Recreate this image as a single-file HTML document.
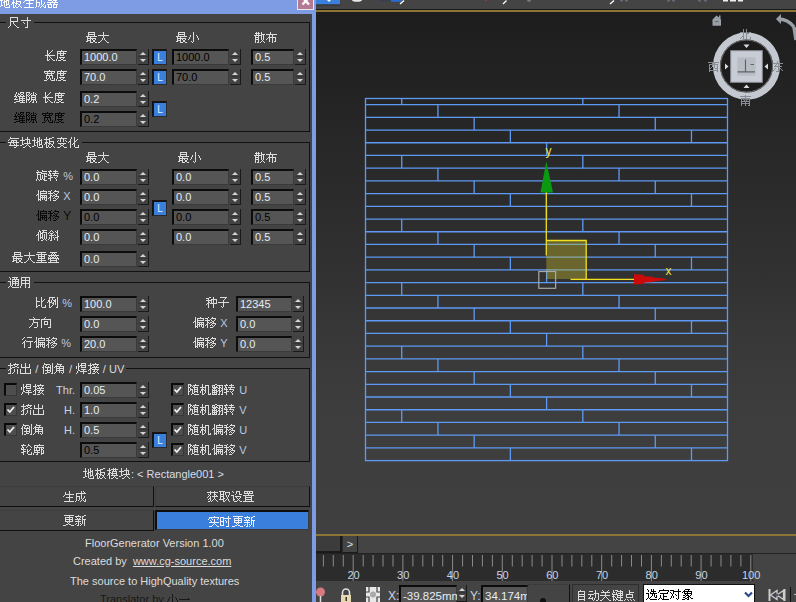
<!DOCTYPE html><html><head><meta charset="utf-8"><style>
*{margin:0;padding:0;box-sizing:border-box}
html,body{width:796px;height:602px;overflow:hidden;background:#444;font-family:"Liberation Sans",sans-serif;}
.abs{position:absolute}
.lbl{position:absolute;color:#dcdcdc;font-size:12px;line-height:14px;white-space:nowrap}
.lt{color:#b8c8e0;font-size:11px}
.dis{color:#0a0a0a}
.inp{position:absolute;background:#555;border-top:2px solid #0c0c0c;border-left:2px solid #0c0c0c;border-bottom:1px solid #3a3a3a;border-right:1px solid #3a3a3a;height:16px}
.inp span{position:absolute;left:2px;top:0px;font-size:11px;line-height:12px;color:#e4ecf4}
.inp.d span{color:#000}
.spn{position:absolute;width:11px;height:16px;background:linear-gradient(#424242 0,#424242 7px,#353535 7px,#353535 8px,#424242 8px);border-right:1px solid #1a1a1a;border-bottom:1px solid #1a1a1a}
.spn:before{content:"";position:absolute;left:1.5px;top:3px;border-left:3px solid transparent;border-right:3px solid transparent;border-bottom:3px solid #d4d4d4}
.spn:after{content:"";position:absolute;left:1.5px;top:10px;border-left:3px solid transparent;border-right:3px solid transparent;border-top:3px solid #d4d4d4}
.Lb{position:absolute;width:15px;height:16px;background:#3b7fdc;border-top:2px solid #141414;border-left:2px solid #141414;border-right:1px solid #2a2a2a;border-bottom:1px solid #2a2a2a;color:#e8f0ff;font-size:10px;line-height:14px;text-align:center}
.grp{position:absolute;border:1px solid #111}
.gl{position:absolute;background:#444;color:#dcdcdc;font-size:12px;line-height:14px;padding:0 2px;white-space:nowrap}
.cb{position:absolute;width:13px;height:13px;background:#4e4e4e;border-top:2px solid #0a0a0a;border-left:2px solid #0a0a0a;border-right:1px solid #383838;border-bottom:1px solid #383838}
.btn{position:absolute;border:1px solid #3c3c3c;border-right-color:#0e0e0e;border-bottom-color:#0e0e0e;background:#444;color:#dcdcdc;font-size:12px;line-height:20px;text-align:center}
.g{display:inline-block;position:relative;width:12px;height:14px;vertical-align:top}
.g b{font-weight:normal;color:transparent}
.g svg{position:absolute;left:0;top:0;overflow:visible}
.sp{display:inline-block;width:4px}
.tx{position:absolute;color:#dcdcdc;font-size:11px;line-height:12px;white-space:nowrap}

</style></head><body><svg width="0" height="0" style="position:absolute"><defs><symbol id="c4e00" viewBox="0 0 12 14" width="12" height="14"><path d="M9 5h1v1h-1zM0 6h11v1h-11z"/></symbol><symbol id="c4e1c" viewBox="0 0 12 14" width="12" height="14"><path d="M5 1h1v1h-1zM5 2h1v1h-1zM1 3h10v1h-10zM4 4h1v1h-1zM6 4h1v1h-1zM3 5h1v1h-1zM6 5h1v1h-1zM2 6h8v1h-8zM6 7h1v1h-1zM3 8h1v1h-1zM6 8h1v1h-1zM8 8h1v1h-1zM2 9h1v1h-1zM6 9h1v1h-1zM9 9h1v1h-1zM1 10h1v1h-1zM6 10h1v1h-1zM10 10h1v1h-1zM4 11h3v1h-3z"/></symbol><symbol id="c4f8b" viewBox="0 0 12 14" width="12" height="14"><path d="M2 1h6v1h-6zM10 1h1v1h-1zM2 2h1v1h-1zM5 2h1v1h-1zM10 2h1v1h-1zM2 3h1v1h-1zM5 3h1v1h-1zM8 3h1v1h-1zM10 3h1v1h-1zM1 4h2v1h-2zM4 4h1v1h-1zM6 4h3v1h-3zM10 4h1v1h-1zM1 5h2v1h-2zM4 5h1v1h-1zM7 5h2v1h-2zM10 5h1v1h-1zM0 6h1v1h-1zM2 6h3v1h-3zM6 6h1v1h-1zM8 6h1v1h-1zM10 6h1v1h-1zM2 7h1v1h-1zM5 7h2v1h-2zM8 7h1v1h-1zM10 7h1v1h-1zM2 8h1v1h-1zM6 8h1v1h-1zM8 8h1v1h-1zM10 8h1v1h-1zM2 9h1v1h-1zM5 9h1v1h-1zM10 9h1v1h-1zM2 10h1v1h-1zM4 10h1v1h-1zM10 10h1v1h-1zM2 11h2v1h-2zM9 11h2v1h-2z"/></symbol><symbol id="c5012" viewBox="0 0 12 14" width="12" height="14"><path d="M2 1h1v1h-1zM10 1h1v1h-1zM2 2h6v1h-6zM10 2h1v1h-1zM1 3h1v1h-1zM4 3h1v1h-1zM8 3h1v1h-1zM10 3h1v1h-1zM1 4h1v1h-1zM3 4h1v1h-1zM6 4h1v1h-1zM8 4h1v1h-1zM10 4h1v1h-1zM0 5h2v1h-2zM3 5h6v1h-6zM10 5h1v1h-1zM1 6h1v1h-1zM5 6h1v1h-1zM8 6h1v1h-1zM10 6h1v1h-1zM1 7h1v1h-1zM5 7h1v1h-1zM8 7h1v1h-1zM10 7h1v1h-1zM1 8h1v1h-1zM3 8h6v1h-6zM10 8h1v1h-1zM1 9h1v1h-1zM5 9h1v1h-1zM8 9h1v1h-1zM10 9h1v1h-1zM1 10h1v1h-1zM5 10h3v1h-3zM10 10h1v1h-1zM1 11h1v1h-1zM3 11h2v1h-2zM9 11h2v1h-2z"/></symbol><symbol id="c503e" viewBox="0 0 12 14" width="12" height="14"><path d="M3 1h1v1h-1zM6 1h5v1h-5zM3 2h2v1h-2zM7 2h1v1h-1zM2 3h1v1h-1zM4 3h1v1h-1zM6 3h5v1h-5zM2 4h1v1h-1zM4 4h3v1h-3zM10 4h1v1h-1zM1 5h2v1h-2zM4 5h1v1h-1zM6 5h1v1h-1zM8 5h1v1h-1zM10 5h1v1h-1zM0 6h1v1h-1zM2 6h1v1h-1zM4 6h1v1h-1zM6 6h1v1h-1zM8 6h1v1h-1zM10 6h1v1h-1zM2 7h1v1h-1zM4 7h1v1h-1zM6 7h1v1h-1zM8 7h1v1h-1zM10 7h1v1h-1zM2 8h1v1h-1zM4 8h3v1h-3zM8 8h1v1h-1zM10 8h1v1h-1zM2 9h1v1h-1zM4 9h1v1h-1zM6 9h1v1h-1zM8 9h1v1h-1zM10 9h1v1h-1zM2 10h1v1h-1zM7 10h1v1h-1zM9 10h1v1h-1zM2 11h1v1h-1zM5 11h2v1h-2zM10 11h1v1h-1z"/></symbol><symbol id="c504f" viewBox="0 0 12 14" width="12" height="14"><path d="M2 1h1v1h-1zM7 1h1v1h-1zM2 2h1v1h-1zM4 2h7v1h-7zM2 3h1v1h-1zM4 3h1v1h-1zM10 3h1v1h-1zM2 4h1v1h-1zM4 4h7v1h-7zM1 5h2v1h-2zM4 5h1v1h-1zM0 6h1v1h-1zM2 6h1v1h-1zM4 6h7v1h-7zM2 7h1v1h-1zM4 7h1v1h-1zM6 7h1v1h-1zM8 7h1v1h-1zM10 7h1v1h-1zM2 8h1v1h-1zM4 8h7v1h-7zM2 9h1v1h-1zM4 9h1v1h-1zM6 9h1v1h-1zM8 9h1v1h-1zM10 9h1v1h-1zM2 10h3v1h-3zM6 10h1v1h-1zM8 10h1v1h-1zM10 10h1v1h-1zM2 11h1v1h-1zM4 11h1v1h-1zM9 11h2v1h-2z"/></symbol><symbol id="c5173" viewBox="0 0 12 14" width="12" height="14"><path d="M2 1h1v1h-1zM8 1h1v1h-1zM3 2h1v1h-1zM7 2h1v1h-1zM1 3h9v1h-9zM5 4h1v1h-1zM5 5h1v1h-1zM0 6h10v1h-10zM5 7h1v1h-1zM4 8h1v1h-1zM6 8h1v1h-1zM3 9h1v1h-1zM7 9h1v1h-1zM2 10h1v1h-1zM8 10h1v1h-1zM0 11h2v1h-2zM9 11h2v1h-2z"/></symbol><symbol id="c51fa" viewBox="0 0 12 14" width="12" height="14"><path d="M5 1h1v1h-1zM1 2h1v1h-1zM5 2h1v1h-1zM9 2h1v1h-1zM1 3h1v1h-1zM5 3h1v1h-1zM9 3h1v1h-1zM1 4h1v1h-1zM5 4h1v1h-1zM9 4h1v1h-1zM1 5h9v1h-9zM5 6h1v1h-1zM0 7h1v1h-1zM5 7h1v1h-1zM10 7h1v1h-1zM0 8h1v1h-1zM5 8h1v1h-1zM10 8h1v1h-1zM0 9h1v1h-1zM5 9h1v1h-1zM10 9h1v1h-1zM0 10h1v1h-1zM5 10h1v1h-1zM10 10h1v1h-1zM0 11h11v1h-11z"/></symbol><symbol id="c52a8" viewBox="0 0 12 14" width="12" height="14"><path d="M7 1h1v1h-1zM1 2h4v1h-4zM7 2h1v1h-1zM7 3h1v1h-1zM6 4h5v1h-5zM0 5h6v1h-6zM7 5h1v1h-1zM10 5h1v1h-1zM2 6h1v1h-1zM7 6h1v1h-1zM10 6h1v1h-1zM2 7h1v1h-1zM7 7h1v1h-1zM10 7h1v1h-1zM1 8h1v1h-1zM4 8h1v1h-1zM7 8h1v1h-1zM10 8h1v1h-1zM0 9h5v1h-5zM6 9h1v1h-1zM10 9h1v1h-1zM4 10h1v1h-1zM6 10h1v1h-1zM10 10h1v1h-1zM5 11h1v1h-1zM8 11h2v1h-2z"/></symbol><symbol id="c5316" viewBox="0 0 12 14" width="12" height="14"><path d="M3 1h1v1h-1zM6 1h1v1h-1zM3 2h1v1h-1zM6 2h1v1h-1zM2 3h1v1h-1zM6 3h1v1h-1zM9 3h1v1h-1zM2 4h1v1h-1zM6 4h1v1h-1zM8 4h1v1h-1zM1 5h2v1h-2zM6 5h2v1h-2zM0 6h1v1h-1zM2 6h1v1h-1zM6 6h1v1h-1zM2 7h1v1h-1zM5 7h2v1h-2zM2 8h1v1h-1zM4 8h1v1h-1zM6 8h1v1h-1zM2 9h1v1h-1zM6 9h1v1h-1zM10 9h1v1h-1zM2 10h1v1h-1zM6 10h1v1h-1zM10 10h1v1h-1zM2 11h1v1h-1zM7 11h4v1h-4z"/></symbol><symbol id="c5317" viewBox="0 0 12 14" width="12" height="14"><path d="M3 1h1v1h-1zM6 1h1v1h-1zM3 2h1v1h-1zM6 2h1v1h-1zM3 3h1v1h-1zM6 3h1v1h-1zM0 4h4v1h-4zM6 4h1v1h-1zM9 4h2v1h-2zM3 5h1v1h-1zM6 5h3v1h-3zM3 6h1v1h-1zM6 6h1v1h-1zM3 7h1v1h-1zM6 7h1v1h-1zM2 8h2v1h-2zM6 8h1v1h-1zM1 9h1v1h-1zM3 9h1v1h-1zM6 9h1v1h-1zM10 9h1v1h-1zM0 10h1v1h-1zM3 10h1v1h-1zM6 10h1v1h-1zM10 10h1v1h-1zM3 11h1v1h-1zM7 11h4v1h-4z"/></symbol><symbol id="c5357" viewBox="0 0 12 14" width="12" height="14"><path d="M5 1h1v1h-1zM0 2h11v1h-11zM5 3h1v1h-1zM1 4h9v1h-9zM1 5h1v1h-1zM3 5h1v1h-1zM7 5h1v1h-1zM9 5h1v1h-1zM1 6h1v1h-1zM4 6h1v1h-1zM6 6h1v1h-1zM9 6h1v1h-1zM1 7h9v1h-9zM1 8h1v1h-1zM5 8h1v1h-1zM9 8h1v1h-1zM1 9h9v1h-9zM1 10h1v1h-1zM5 10h1v1h-1zM9 10h1v1h-1zM1 11h1v1h-1zM5 11h1v1h-1zM8 11h2v1h-2z"/></symbol><symbol id="c53d6" viewBox="0 0 12 14" width="12" height="14"><path d="M0 1h6v1h-6zM1 2h1v1h-1zM4 2h1v1h-1zM6 2h5v1h-5zM1 3h1v1h-1zM4 3h1v1h-1zM6 3h1v1h-1zM10 3h1v1h-1zM1 4h4v1h-4zM6 4h1v1h-1zM10 4h1v1h-1zM1 5h1v1h-1zM4 5h1v1h-1zM7 5h1v1h-1zM9 5h1v1h-1zM1 6h4v1h-4zM7 6h1v1h-1zM9 6h1v1h-1zM1 7h1v1h-1zM4 7h1v1h-1zM8 7h1v1h-1zM1 8h1v1h-1zM4 8h2v1h-2zM8 8h1v1h-1zM0 9h5v1h-5zM7 9h1v1h-1zM9 9h1v1h-1zM4 10h1v1h-1zM6 10h1v1h-1zM9 10h1v1h-1zM4 11h2v1h-2zM10 11h1v1h-1z"/></symbol><symbol id="c53d8" viewBox="0 0 12 14" width="12" height="14"><path d="M5 1h1v1h-1zM1 2h10v1h-10zM4 3h1v1h-1zM7 3h1v1h-1zM2 4h1v1h-1zM4 4h1v1h-1zM7 4h1v1h-1zM9 4h1v1h-1zM1 5h1v1h-1zM4 5h1v1h-1zM7 5h1v1h-1zM10 5h1v1h-1zM2 7h8v1h-8zM4 8h1v1h-1zM7 8h1v1h-1zM5 9h2v1h-2zM4 10h1v1h-1zM7 10h1v1h-1zM1 11h3v1h-3zM8 11h3v1h-3z"/></symbol><symbol id="c53e0" viewBox="0 0 12 14" width="12" height="14"><path d="M2 1h7v1h-7zM4 2h1v1h-1zM6 2h1v1h-1zM3 3h1v1h-1zM5 3h1v1h-1zM7 3h1v1h-1zM0 4h11v1h-11zM1 5h1v1h-1zM3 5h1v1h-1zM6 5h1v1h-1zM8 5h1v1h-1zM0 6h1v1h-1zM2 6h1v1h-1zM4 6h2v1h-2zM7 6h1v1h-1zM9 6h1v1h-1zM0 7h11v1h-11zM0 8h1v1h-1zM2 8h1v1h-1zM8 8h1v1h-1zM10 8h1v1h-1zM2 9h7v1h-7zM2 10h1v1h-1zM8 10h1v1h-1zM0 11h11v1h-11z"/></symbol><symbol id="c5411" viewBox="0 0 12 14" width="12" height="14"><path d="M4 1h1v1h-1zM3 2h1v1h-1zM0 3h10v1h-10zM0 4h1v1h-1zM9 4h1v1h-1zM0 5h1v1h-1zM3 5h4v1h-4zM9 5h1v1h-1zM0 6h1v1h-1zM3 6h1v1h-1zM6 6h1v1h-1zM9 6h1v1h-1zM0 7h1v1h-1zM3 7h1v1h-1zM6 7h1v1h-1zM9 7h1v1h-1zM0 8h1v1h-1zM3 8h4v1h-4zM9 8h1v1h-1zM0 9h1v1h-1zM9 9h1v1h-1zM0 10h1v1h-1zM9 10h1v1h-1zM0 11h1v1h-1zM7 11h3v1h-3z"/></symbol><symbol id="c5668" viewBox="0 0 12 14" width="12" height="14"><path d="M1 1h4v1h-4zM6 1h4v1h-4zM1 2h1v1h-1zM4 2h1v1h-1zM6 2h1v1h-1zM9 2h1v1h-1zM1 3h1v1h-1zM4 3h1v1h-1zM6 3h1v1h-1zM9 3h1v1h-1zM1 4h4v1h-4zM6 4h4v1h-4zM5 5h1v1h-1zM8 5h1v1h-1zM0 6h11v1h-11zM3 7h1v1h-1zM7 7h1v1h-1zM0 8h5v1h-5zM6 8h5v1h-5zM1 9h1v1h-1zM4 9h1v1h-1zM6 9h1v1h-1zM9 9h1v1h-1zM1 10h1v1h-1zM4 10h1v1h-1zM6 10h1v1h-1zM9 10h1v1h-1zM1 11h4v1h-4zM6 11h4v1h-4z"/></symbol><symbol id="c5730" viewBox="0 0 12 14" width="12" height="14"><path d="M2 1h1v1h-1zM7 1h1v1h-1zM2 2h1v1h-1zM5 2h1v1h-1zM7 2h1v1h-1zM2 3h1v1h-1zM5 3h1v1h-1zM7 3h1v1h-1zM9 3h1v1h-1zM0 4h4v1h-4zM5 4h1v1h-1zM7 4h3v1h-3zM2 5h1v1h-1zM5 5h3v1h-3zM9 5h1v1h-1zM2 6h1v1h-1zM4 6h2v1h-2zM7 6h1v1h-1zM9 6h1v1h-1zM2 7h1v1h-1zM5 7h1v1h-1zM7 7h1v1h-1zM9 7h1v1h-1zM2 8h1v1h-1zM5 8h1v1h-1zM7 8h3v1h-3zM2 9h2v1h-2zM5 9h1v1h-1zM7 9h1v1h-1zM10 9h1v1h-1zM0 10h2v1h-2zM5 10h1v1h-1zM10 10h1v1h-1zM6 11h5v1h-5z"/></symbol><symbol id="c5757" viewBox="0 0 12 14" width="12" height="14"><path d="M2 1h1v1h-1zM7 1h1v1h-1zM2 2h1v1h-1zM7 2h1v1h-1zM2 3h1v1h-1zM5 3h5v1h-5zM0 4h5v1h-5zM7 4h1v1h-1zM9 4h1v1h-1zM2 5h1v1h-1zM7 5h1v1h-1zM9 5h1v1h-1zM2 6h1v1h-1zM7 6h1v1h-1zM9 6h1v1h-1zM2 7h1v1h-1zM4 7h7v1h-7zM2 8h2v1h-2zM7 8h1v1h-1zM0 9h2v1h-2zM6 9h1v1h-1zM8 9h1v1h-1zM5 10h1v1h-1zM9 10h1v1h-1zM3 11h2v1h-2zM10 11h1v1h-1z"/></symbol><symbol id="c5927" viewBox="0 0 12 14" width="12" height="14"><path d="M5 1h1v1h-1zM5 2h1v1h-1zM5 3h1v1h-1zM0 4h11v1h-11zM5 5h1v1h-1zM5 6h1v1h-1zM4 7h1v1h-1zM6 7h1v1h-1zM4 8h1v1h-1zM6 8h1v1h-1zM3 9h1v1h-1zM7 9h1v1h-1zM2 10h1v1h-1zM8 10h1v1h-1zM0 11h2v1h-2zM9 11h2v1h-2z"/></symbol><symbol id="c5b50" viewBox="0 0 12 14" width="12" height="14"><path d="M2 1h7v1h-7zM7 2h1v1h-1zM6 3h1v1h-1zM5 4h1v1h-1zM5 5h1v1h-1zM0 6h11v1h-11zM5 7h1v1h-1zM5 8h1v1h-1zM5 9h1v1h-1zM3 10h1v1h-1zM5 10h1v1h-1zM4 11h1v1h-1z"/></symbol><symbol id="c5b9a" viewBox="0 0 12 14" width="12" height="14"><path d="M5 1h1v1h-1zM1 2h10v1h-10zM1 3h1v1h-1zM10 3h1v1h-1zM0 4h1v1h-1zM9 4h1v1h-1zM2 5h8v1h-8zM5 6h1v1h-1zM2 7h1v1h-1zM5 7h1v1h-1zM2 8h1v1h-1zM5 8h4v1h-4zM2 9h1v1h-1zM5 9h1v1h-1zM1 10h1v1h-1zM3 10h1v1h-1zM5 10h1v1h-1zM0 11h1v1h-1zM4 11h7v1h-7z"/></symbol><symbol id="c5b9e" viewBox="0 0 12 14" width="12" height="14"><path d="M6 1h1v1h-1zM1 2h10v1h-10zM1 3h1v1h-1zM3 3h1v1h-1zM10 3h1v1h-1zM0 4h1v1h-1zM4 4h1v1h-1zM6 4h1v1h-1zM9 4h1v1h-1zM2 5h1v1h-1zM6 5h1v1h-1zM3 6h1v1h-1zM6 6h1v1h-1zM1 7h10v1h-10zM6 8h1v1h-1zM5 9h1v1h-1zM7 9h1v1h-1zM4 10h1v1h-1zM8 10h1v1h-1zM1 11h3v1h-3zM9 11h2v1h-2z"/></symbol><symbol id="c5bbd" viewBox="0 0 12 14" width="12" height="14"><path d="M5 1h1v1h-1zM0 2h11v1h-11zM0 3h1v1h-1zM3 3h1v1h-1zM7 3h1v1h-1zM10 3h1v1h-1zM1 4h9v1h-9zM3 5h1v1h-1zM7 5h1v1h-1zM2 6h7v1h-7zM2 7h1v1h-1zM5 7h1v1h-1zM8 7h1v1h-1zM2 8h1v1h-1zM5 8h1v1h-1zM8 8h1v1h-1zM2 9h1v1h-1zM4 9h1v1h-1zM6 9h1v1h-1zM8 9h1v1h-1zM10 9h1v1h-1zM3 10h1v1h-1zM6 10h1v1h-1zM10 10h1v1h-1zM0 11h3v1h-3zM7 11h4v1h-4z"/></symbol><symbol id="c5bf8" viewBox="0 0 12 14" width="12" height="14"><path d="M7 1h1v1h-1zM7 2h1v1h-1zM7 3h1v1h-1zM1 4h10v1h-10zM7 5h1v1h-1zM3 6h1v1h-1zM7 6h1v1h-1zM4 7h1v1h-1zM7 7h1v1h-1zM7 8h1v1h-1zM7 9h1v1h-1zM7 10h1v1h-1zM5 11h3v1h-3z"/></symbol><symbol id="c5bf9" viewBox="0 0 12 14" width="12" height="14"><path d="M8 1h1v1h-1zM0 2h4v1h-4zM8 2h1v1h-1zM3 3h8v1h-8zM0 4h1v1h-1zM3 4h1v1h-1zM8 4h1v1h-1zM1 5h1v1h-1zM3 5h1v1h-1zM8 5h1v1h-1zM2 6h1v1h-1zM5 6h1v1h-1zM8 6h1v1h-1zM2 7h1v1h-1zM6 7h1v1h-1zM8 7h1v1h-1zM1 8h1v1h-1zM3 8h1v1h-1zM8 8h1v1h-1zM1 9h1v1h-1zM3 9h1v1h-1zM8 9h1v1h-1zM0 10h1v1h-1zM6 10h1v1h-1zM8 10h1v1h-1zM7 11h1v1h-1z"/></symbol><symbol id="c5c0f" viewBox="0 0 12 14" width="12" height="14"><path d="M5 1h1v1h-1zM5 2h1v1h-1zM5 3h1v1h-1zM2 4h1v1h-1zM5 4h1v1h-1zM8 4h1v1h-1zM2 5h1v1h-1zM5 5h1v1h-1zM9 5h1v1h-1zM1 6h1v1h-1zM5 6h1v1h-1zM9 6h1v1h-1zM1 7h1v1h-1zM5 7h1v1h-1zM10 7h1v1h-1zM0 8h1v1h-1zM5 8h1v1h-1zM10 8h1v1h-1zM5 9h1v1h-1zM3 10h1v1h-1zM5 10h1v1h-1zM4 11h1v1h-1z"/></symbol><symbol id="c5c3a" viewBox="0 0 12 14" width="12" height="14"><path d="M2 1h8v1h-8zM2 2h1v1h-1zM9 2h1v1h-1zM2 3h1v1h-1zM9 3h1v1h-1zM2 4h1v1h-1zM9 4h1v1h-1zM2 5h8v1h-8zM2 6h1v1h-1zM5 6h1v1h-1zM2 7h1v1h-1zM5 7h1v1h-1zM2 8h1v1h-1zM6 8h1v1h-1zM2 9h1v1h-1zM7 9h1v1h-1zM1 10h1v1h-1zM8 10h1v1h-1zM0 11h1v1h-1zM9 11h2v1h-2z"/></symbol><symbol id="c5e03" viewBox="0 0 12 14" width="12" height="14"><path d="M4 1h1v1h-1zM4 2h1v1h-1zM0 3h11v1h-11zM3 4h1v1h-1zM6 4h1v1h-1zM3 5h1v1h-1zM6 5h1v1h-1zM2 6h8v1h-8zM1 7h1v1h-1zM3 7h1v1h-1zM6 7h1v1h-1zM9 7h1v1h-1zM0 8h1v1h-1zM3 8h1v1h-1zM6 8h1v1h-1zM9 8h1v1h-1zM3 9h1v1h-1zM6 9h1v1h-1zM9 9h1v1h-1zM3 10h1v1h-1zM6 10h1v1h-1zM8 10h2v1h-2zM6 11h1v1h-1z"/></symbol><symbol id="c5ea6" viewBox="0 0 12 14" width="12" height="14"><path d="M5 1h1v1h-1zM1 2h10v1h-10zM1 3h1v1h-1zM4 3h1v1h-1zM7 3h1v1h-1zM1 4h9v1h-9zM1 5h1v1h-1zM4 5h1v1h-1zM7 5h1v1h-1zM1 6h1v1h-1zM4 6h4v1h-4zM1 7h1v1h-1zM1 8h1v1h-1zM3 8h6v1h-6zM1 9h1v1h-1zM4 9h1v1h-1zM7 9h1v1h-1zM0 10h1v1h-1zM5 10h2v1h-2zM0 11h1v1h-1zM2 11h3v1h-3zM7 11h3v1h-3z"/></symbol><symbol id="c5ed3" viewBox="0 0 12 14" width="12" height="14"><path d="M6 1h1v1h-1zM1 2h10v1h-10zM1 3h1v1h-1zM4 3h1v1h-1zM1 4h10v1h-10zM1 5h1v1h-1zM3 5h1v1h-1zM6 5h1v1h-1zM8 5h1v1h-1zM10 5h1v1h-1zM1 6h1v1h-1zM3 6h1v1h-1zM6 6h1v1h-1zM8 6h2v1h-2zM1 7h6v1h-6zM8 7h1v1h-1zM10 7h1v1h-1zM1 8h1v1h-1zM4 8h1v1h-1zM8 8h1v1h-1zM10 8h1v1h-1zM1 9h6v1h-6zM8 9h1v1h-1zM10 9h1v1h-1zM0 10h1v1h-1zM4 10h1v1h-1zM8 10h3v1h-3zM0 11h1v1h-1zM3 11h2v1h-2zM8 11h1v1h-1z"/></symbol><symbol id="c6210" viewBox="0 0 12 14" width="12" height="14"><path d="M6 1h1v1h-1zM8 1h1v1h-1zM6 2h1v1h-1zM9 2h1v1h-1zM1 3h10v1h-10zM1 4h1v1h-1zM6 4h1v1h-1zM1 5h1v1h-1zM6 5h1v1h-1zM1 6h4v1h-4zM6 6h1v1h-1zM9 6h1v1h-1zM1 7h1v1h-1zM4 7h1v1h-1zM6 7h1v1h-1zM9 7h1v1h-1zM1 8h1v1h-1zM4 8h1v1h-1zM6 8h1v1h-1zM8 8h1v1h-1zM1 9h1v1h-1zM4 9h1v1h-1zM7 9h1v1h-1zM10 9h1v1h-1zM1 10h1v1h-1zM3 10h1v1h-1zM6 10h1v1h-1zM8 10h1v1h-1zM10 10h1v1h-1zM0 11h1v1h-1zM5 11h1v1h-1zM9 11h2v1h-2z"/></symbol><symbol id="c6324" viewBox="0 0 12 14" width="12" height="14"><path d="M2 1h1v1h-1zM7 1h1v1h-1zM2 2h1v1h-1zM5 2h6v1h-6zM0 3h5v1h-5zM6 3h1v1h-1zM9 3h1v1h-1zM2 4h1v1h-1zM7 4h2v1h-2zM2 5h1v1h-1zM4 5h3v1h-3zM9 5h2v1h-2zM2 6h2v1h-2zM1 7h2v1h-2zM6 7h1v1h-1zM9 7h1v1h-1zM0 8h1v1h-1zM2 8h1v1h-1zM6 8h1v1h-1zM9 8h1v1h-1zM2 9h1v1h-1zM6 9h1v1h-1zM9 9h1v1h-1zM2 10h1v1h-1zM5 10h1v1h-1zM9 10h1v1h-1zM0 11h3v1h-3zM4 11h1v1h-1zM9 11h1v1h-1z"/></symbol><symbol id="c63a5" viewBox="0 0 12 14" width="12" height="14"><path d="M2 1h1v1h-1zM7 1h1v1h-1zM2 2h1v1h-1zM4 2h7v1h-7zM0 3h4v1h-4zM5 3h1v1h-1zM9 3h1v1h-1zM2 4h1v1h-1zM6 4h1v1h-1zM8 4h1v1h-1zM2 5h1v1h-1zM4 5h7v1h-7zM2 6h2v1h-2zM7 6h1v1h-1zM1 7h2v1h-2zM4 7h7v1h-7zM0 8h1v1h-1zM2 8h1v1h-1zM6 8h1v1h-1zM9 8h1v1h-1zM2 9h1v1h-1zM5 9h2v1h-2zM8 9h1v1h-1zM2 10h1v1h-1zM7 10h1v1h-1zM9 10h1v1h-1zM0 11h3v1h-3zM4 11h3v1h-3zM10 11h1v1h-1z"/></symbol><symbol id="c6563" viewBox="0 0 12 14" width="12" height="14"><path d="M2 1h1v1h-1zM4 1h1v1h-1zM7 1h1v1h-1zM1 2h5v1h-5zM7 2h1v1h-1zM2 3h1v1h-1zM4 3h1v1h-1zM7 3h4v1h-4zM0 4h8v1h-8zM9 4h1v1h-1zM1 5h1v1h-1zM4 5h1v1h-1zM7 5h1v1h-1zM9 5h1v1h-1zM1 6h4v1h-4zM7 6h1v1h-1zM9 6h1v1h-1zM1 7h1v1h-1zM4 7h1v1h-1zM7 7h1v1h-1zM9 7h1v1h-1zM1 8h4v1h-4zM7 8h1v1h-1zM9 8h1v1h-1zM1 9h1v1h-1zM4 9h1v1h-1zM8 9h1v1h-1zM1 10h1v1h-1zM4 10h1v1h-1zM7 10h1v1h-1zM9 10h1v1h-1zM1 11h1v1h-1zM3 11h2v1h-2zM6 11h1v1h-1zM10 11h1v1h-1z"/></symbol><symbol id="c659c" viewBox="0 0 12 14" width="12" height="14"><path d="M3 1h1v1h-1zM9 1h1v1h-1zM2 2h1v1h-1zM4 2h1v1h-1zM7 2h1v1h-1zM9 2h1v1h-1zM1 3h1v1h-1zM5 3h1v1h-1zM8 3h2v1h-2zM0 4h1v1h-1zM2 4h3v1h-3zM9 4h1v1h-1zM3 5h1v1h-1zM6 5h1v1h-1zM9 5h1v1h-1zM1 6h5v1h-5zM7 6h1v1h-1zM9 6h1v1h-1zM3 7h1v1h-1zM9 7h2v1h-2zM1 8h1v1h-1zM3 8h1v1h-1zM5 8h1v1h-1zM7 8h3v1h-3zM1 9h1v1h-1zM3 9h1v1h-1zM6 9h1v1h-1zM9 9h1v1h-1zM0 10h1v1h-1zM3 10h1v1h-1zM6 10h1v1h-1zM9 10h1v1h-1zM2 11h2v1h-2zM9 11h1v1h-1z"/></symbol><symbol id="c65b0" viewBox="0 0 12 14" width="12" height="14"><path d="M3 1h1v1h-1zM9 1h2v1h-2zM0 2h6v1h-6zM7 2h2v1h-2zM1 3h1v1h-1zM5 3h1v1h-1zM7 3h1v1h-1zM2 4h1v1h-1zM4 4h1v1h-1zM7 4h1v1h-1zM0 5h6v1h-6zM7 5h4v1h-4zM3 6h1v1h-1zM7 6h1v1h-1zM9 6h1v1h-1zM0 7h6v1h-6zM7 7h1v1h-1zM9 7h1v1h-1zM3 8h1v1h-1zM7 8h1v1h-1zM9 8h1v1h-1zM1 9h1v1h-1zM3 9h1v1h-1zM5 9h1v1h-1zM7 9h1v1h-1zM9 9h1v1h-1zM0 10h1v1h-1zM3 10h1v1h-1zM6 10h1v1h-1zM9 10h1v1h-1zM2 11h2v1h-2zM5 11h1v1h-1zM9 11h1v1h-1z"/></symbol><symbol id="c65b9" viewBox="0 0 12 14" width="12" height="14"><path d="M4 1h1v1h-1zM5 2h1v1h-1zM0 3h11v1h-11zM4 4h1v1h-1zM4 5h1v1h-1zM4 6h5v1h-5zM3 7h1v1h-1zM8 7h1v1h-1zM3 8h1v1h-1zM8 8h1v1h-1zM2 9h1v1h-1zM8 9h1v1h-1zM1 10h1v1h-1zM8 10h1v1h-1zM0 11h1v1h-1zM5 11h3v1h-3z"/></symbol><symbol id="c65cb" viewBox="0 0 12 14" width="12" height="14"><path d="M1 1h1v1h-1zM6 1h1v1h-1zM2 2h1v1h-1zM6 2h5v1h-5zM0 3h6v1h-6zM1 4h1v1h-1zM5 4h6v1h-6zM1 5h4v1h-4zM8 5h1v1h-1zM10 5h1v1h-1zM1 6h1v1h-1zM4 6h1v1h-1zM6 6h1v1h-1zM8 6h1v1h-1zM1 7h1v1h-1zM4 7h1v1h-1zM6 7h1v1h-1zM8 7h3v1h-3zM1 8h1v1h-1zM4 8h1v1h-1zM6 8h1v1h-1zM8 8h1v1h-1zM1 9h1v1h-1zM4 9h1v1h-1zM6 9h1v1h-1zM8 9h1v1h-1zM0 10h1v1h-1zM2 10h1v1h-1zM4 10h2v1h-2zM7 10h2v1h-2zM0 11h1v1h-1zM3 11h1v1h-1zM8 11h3v1h-3z"/></symbol><symbol id="c65f6" viewBox="0 0 12 14" width="12" height="14"><path d="M8 1h1v1h-1zM0 2h4v1h-4zM8 2h1v1h-1zM0 3h1v1h-1zM3 3h8v1h-8zM0 4h1v1h-1zM3 4h1v1h-1zM8 4h1v1h-1zM0 5h1v1h-1zM3 5h1v1h-1zM5 5h1v1h-1zM8 5h1v1h-1zM0 6h4v1h-4zM6 6h1v1h-1zM8 6h1v1h-1zM0 7h1v1h-1zM3 7h1v1h-1zM6 7h1v1h-1zM8 7h1v1h-1zM0 8h1v1h-1zM3 8h1v1h-1zM8 8h1v1h-1zM0 9h1v1h-1zM3 9h1v1h-1zM8 9h1v1h-1zM0 10h4v1h-4zM8 10h1v1h-1zM6 11h3v1h-3z"/></symbol><symbol id="c66f4" viewBox="0 0 12 14" width="12" height="14"><path d="M1 1h10v1h-10zM6 2h1v1h-1zM2 3h8v1h-8zM2 4h1v1h-1zM6 4h1v1h-1zM9 4h1v1h-1zM2 5h8v1h-8zM2 6h1v1h-1zM6 6h1v1h-1zM9 6h1v1h-1zM2 7h8v1h-8zM4 8h1v1h-1zM6 8h1v1h-1zM5 9h1v1h-1zM3 10h2v1h-2zM6 10h2v1h-2zM0 11h3v1h-3zM8 11h3v1h-3z"/></symbol><symbol id="c6700" viewBox="0 0 12 14" width="12" height="14"><path d="M2 1h7v1h-7zM2 2h1v1h-1zM8 2h1v1h-1zM2 3h7v1h-7zM2 4h1v1h-1zM8 4h1v1h-1zM0 5h11v1h-11zM1 6h1v1h-1zM4 6h1v1h-1zM1 7h9v1h-9zM1 8h1v1h-1zM4 8h1v1h-1zM6 8h1v1h-1zM9 8h1v1h-1zM1 9h4v1h-4zM7 9h2v1h-2zM0 10h2v1h-2zM4 10h1v1h-1zM7 10h2v1h-2zM4 11h3v1h-3zM9 11h2v1h-2z"/></symbol><symbol id="c673a" viewBox="0 0 12 14" width="12" height="14"><path d="M2 1h1v1h-1zM2 2h1v1h-1zM5 2h4v1h-4zM2 3h1v1h-1zM5 3h1v1h-1zM8 3h1v1h-1zM0 4h6v1h-6zM8 4h1v1h-1zM2 5h1v1h-1zM5 5h1v1h-1zM8 5h1v1h-1zM1 6h3v1h-3zM5 6h1v1h-1zM8 6h1v1h-1zM1 7h2v1h-2zM4 7h2v1h-2zM8 7h1v1h-1zM0 8h1v1h-1zM2 8h1v1h-1zM5 8h1v1h-1zM8 8h1v1h-1zM0 9h1v1h-1zM2 9h1v1h-1zM5 9h1v1h-1zM8 9h1v1h-1zM2 10h1v1h-1zM4 10h1v1h-1zM8 10h1v1h-1zM10 10h1v1h-1zM2 11h2v1h-2zM8 11h3v1h-3z"/></symbol><symbol id="c677f" viewBox="0 0 12 14" width="12" height="14"><path d="M2 1h1v1h-1zM8 1h2v1h-2zM2 2h1v1h-1zM5 2h3v1h-3zM0 3h6v1h-6zM2 4h1v1h-1zM5 4h1v1h-1zM2 5h1v1h-1zM5 5h5v1h-5zM1 6h3v1h-3zM5 6h1v1h-1zM9 6h1v1h-1zM1 7h2v1h-2zM4 7h3v1h-3zM9 7h1v1h-1zM0 8h1v1h-1zM2 8h1v1h-1zM5 8h1v1h-1zM7 8h2v1h-2zM2 9h1v1h-1zM4 9h1v1h-1zM8 9h1v1h-1zM2 10h1v1h-1zM4 10h1v1h-1zM7 10h1v1h-1zM9 10h1v1h-1zM2 11h2v1h-2zM5 11h2v1h-2zM10 11h1v1h-1z"/></symbol><symbol id="c6a21" viewBox="0 0 12 14" width="12" height="14"><path d="M2 1h1v1h-1zM6 1h1v1h-1zM8 1h1v1h-1zM2 2h1v1h-1zM4 2h7v1h-7zM0 3h4v1h-4zM6 3h1v1h-1zM8 3h1v1h-1zM2 4h1v1h-1zM5 4h5v1h-5zM2 5h2v1h-2zM5 5h1v1h-1zM9 5h1v1h-1zM1 6h2v1h-2zM4 6h6v1h-6zM1 7h2v1h-2zM5 7h1v1h-1zM9 7h1v1h-1zM0 8h1v1h-1zM2 8h1v1h-1zM4 8h7v1h-7zM2 9h1v1h-1zM7 9h1v1h-1zM2 10h1v1h-1zM6 10h1v1h-1zM8 10h1v1h-1zM2 11h1v1h-1zM4 11h2v1h-2zM9 11h2v1h-2z"/></symbol><symbol id="c6bcf" viewBox="0 0 12 14" width="12" height="14"><path d="M2 1h1v1h-1zM2 2h9v1h-9zM1 3h1v1h-1zM0 4h1v1h-1zM3 4h6v1h-6zM3 5h1v1h-1zM5 5h1v1h-1zM8 5h1v1h-1zM0 6h11v1h-11zM2 7h1v1h-1zM5 7h1v1h-1zM8 7h1v1h-1zM2 8h1v1h-1zM6 8h1v1h-1zM8 8h1v1h-1zM1 9h10v1h-10zM8 10h1v1h-1zM6 11h2v1h-2z"/></symbol><symbol id="c6bd4" viewBox="0 0 12 14" width="12" height="14"><path d="M1 1h1v1h-1zM6 1h1v1h-1zM1 2h1v1h-1zM6 2h1v1h-1zM1 3h1v1h-1zM6 3h1v1h-1zM9 3h1v1h-1zM1 4h1v1h-1zM6 4h1v1h-1zM8 4h1v1h-1zM1 5h4v1h-4zM6 5h2v1h-2zM1 6h1v1h-1zM6 6h1v1h-1zM1 7h1v1h-1zM6 7h1v1h-1zM1 8h1v1h-1zM6 8h1v1h-1zM1 9h1v1h-1zM3 9h2v1h-2zM6 9h1v1h-1zM10 9h1v1h-1zM1 10h2v1h-2zM6 10h1v1h-1zM10 10h1v1h-1zM1 11h1v1h-1zM7 11h4v1h-4z"/></symbol><symbol id="c70b9" viewBox="0 0 12 14" width="12" height="14"><path d="M5 1h1v1h-1zM5 2h1v1h-1zM5 3h5v1h-5zM5 4h1v1h-1zM2 5h7v1h-7zM2 6h1v1h-1zM8 6h1v1h-1zM2 7h1v1h-1zM8 7h1v1h-1zM2 8h7v1h-7zM1 10h1v1h-1zM3 10h1v1h-1zM6 10h1v1h-1zM9 10h1v1h-1zM0 11h1v1h-1zM4 11h1v1h-1zM7 11h1v1h-1zM10 11h1v1h-1z"/></symbol><symbol id="c710a" viewBox="0 0 12 14" width="12" height="14"><path d="M2 1h1v1h-1zM5 1h5v1h-5zM2 2h1v1h-1zM5 2h1v1h-1zM9 2h1v1h-1zM2 3h1v1h-1zM4 3h6v1h-6zM0 4h1v1h-1zM2 4h2v1h-2zM5 4h1v1h-1zM9 4h1v1h-1zM0 5h1v1h-1zM2 5h1v1h-1zM5 5h5v1h-5zM0 6h1v1h-1zM2 6h1v1h-1zM2 7h1v1h-1zM5 7h5v1h-5zM2 8h2v1h-2zM7 8h1v1h-1zM1 9h1v1h-1zM4 9h7v1h-7zM1 10h1v1h-1zM7 10h1v1h-1zM0 11h1v1h-1zM7 11h1v1h-1z"/></symbol><symbol id="c751f" viewBox="0 0 12 14" width="12" height="14"><path d="M6 1h1v1h-1zM2 2h1v1h-1zM6 2h1v1h-1zM2 3h1v1h-1zM6 3h1v1h-1zM2 4h9v1h-9zM1 5h1v1h-1zM6 5h1v1h-1zM0 6h1v1h-1zM6 6h1v1h-1zM3 7h7v1h-7zM6 8h1v1h-1zM6 9h1v1h-1zM6 10h1v1h-1zM1 11h10v1h-10z"/></symbol><symbol id="c7528" viewBox="0 0 12 14" width="12" height="14"><path d="M1 1h9v1h-9zM1 2h1v1h-1zM5 2h1v1h-1zM9 2h1v1h-1zM1 3h1v1h-1zM5 3h1v1h-1zM9 3h1v1h-1zM1 4h9v1h-9zM1 5h1v1h-1zM5 5h1v1h-1zM9 5h1v1h-1zM1 6h1v1h-1zM5 6h1v1h-1zM9 6h1v1h-1zM1 7h9v1h-9zM1 8h1v1h-1zM5 8h1v1h-1zM9 8h1v1h-1zM1 9h1v1h-1zM5 9h1v1h-1zM9 9h1v1h-1zM0 10h1v1h-1zM5 10h1v1h-1zM9 10h1v1h-1zM0 11h1v1h-1zM5 11h1v1h-1zM8 11h2v1h-2z"/></symbol><symbol id="c79cd" viewBox="0 0 12 14" width="12" height="14"><path d="M3 1h2v1h-2zM7 1h1v1h-1zM0 2h3v1h-3zM7 2h1v1h-1zM2 3h1v1h-1zM5 3h6v1h-6zM0 4h6v1h-6zM7 4h1v1h-1zM10 4h1v1h-1zM2 5h1v1h-1zM5 5h1v1h-1zM7 5h1v1h-1zM10 5h1v1h-1zM2 6h2v1h-2zM5 6h1v1h-1zM7 6h1v1h-1zM10 6h1v1h-1zM1 7h2v1h-2zM4 7h7v1h-7zM0 8h1v1h-1zM2 8h1v1h-1zM7 8h1v1h-1zM2 9h1v1h-1zM7 9h1v1h-1zM2 10h1v1h-1zM7 10h1v1h-1zM2 11h1v1h-1zM7 11h1v1h-1z"/></symbol><symbol id="c79fb" viewBox="0 0 12 14" width="12" height="14"><path d="M3 1h1v1h-1zM7 1h1v1h-1zM0 2h3v1h-3zM6 2h5v1h-5zM2 3h1v1h-1zM5 3h1v1h-1zM10 3h1v1h-1zM0 4h5v1h-5zM6 4h1v1h-1zM9 4h1v1h-1zM2 5h1v1h-1zM7 5h2v1h-2zM2 6h2v1h-2zM5 6h2v1h-2zM8 6h1v1h-1zM2 7h1v1h-1zM4 7h1v1h-1zM7 7h4v1h-4zM1 8h2v1h-2zM6 8h1v1h-1zM10 8h1v1h-1zM0 9h1v1h-1zM2 9h1v1h-1zM5 9h1v1h-1zM7 9h1v1h-1zM9 9h1v1h-1zM2 10h1v1h-1zM8 10h1v1h-1zM2 11h1v1h-1zM5 11h3v1h-3z"/></symbol><symbol id="c7f1d" viewBox="0 0 12 14" width="12" height="14"><path d="M2 1h1v1h-1zM6 1h4v1h-4zM2 2h1v1h-1zM4 2h1v1h-1zM6 2h1v1h-1zM9 2h1v1h-1zM1 3h1v1h-1zM4 3h2v1h-2zM7 3h2v1h-2zM1 4h1v1h-1zM3 4h1v1h-1zM6 4h1v1h-1zM9 4h1v1h-1zM0 5h3v1h-3zM4 5h7v1h-7zM2 6h1v1h-1zM5 6h1v1h-1zM8 6h1v1h-1zM1 7h1v1h-1zM5 7h6v1h-6zM0 8h4v1h-4zM5 8h1v1h-1zM8 8h1v1h-1zM5 9h6v1h-6zM2 10h4v1h-4zM8 10h1v1h-1zM0 11h2v1h-2zM6 11h5v1h-5z"/></symbol><symbol id="c7f6e" viewBox="0 0 12 14" width="12" height="14"><path d="M1 1h9v1h-9zM1 2h1v1h-1zM4 2h1v1h-1zM6 2h1v1h-1zM9 2h1v1h-1zM1 3h9v1h-9zM5 4h1v1h-1zM0 5h11v1h-11zM2 6h1v1h-1zM8 6h1v1h-1zM2 7h7v1h-7zM2 8h1v1h-1zM8 8h1v1h-1zM2 9h7v1h-7zM2 10h1v1h-1zM8 10h1v1h-1zM0 11h11v1h-11z"/></symbol><symbol id="c7ffb" viewBox="0 0 12 14" width="12" height="14"><path d="M3 1h2v1h-2zM0 2h3v1h-3zM5 2h6v1h-6zM0 3h1v1h-1zM2 3h1v1h-1zM4 3h1v1h-1zM7 3h1v1h-1zM10 3h1v1h-1zM0 4h6v1h-6zM7 4h2v1h-2zM10 4h1v1h-1zM1 5h3v1h-3zM6 5h2v1h-2zM9 5h2v1h-2zM0 6h1v1h-1zM2 6h1v1h-1zM4 6h1v1h-1zM7 6h1v1h-1zM10 6h1v1h-1zM0 7h5v1h-5zM6 7h2v1h-2zM9 7h2v1h-2zM0 8h1v1h-1zM2 8h1v1h-1zM4 8h2v1h-2zM7 8h2v1h-2zM10 8h1v1h-1zM0 9h5v1h-5zM7 9h1v1h-1zM10 9h1v1h-1zM0 10h1v1h-1zM2 10h1v1h-1zM4 10h1v1h-1zM7 10h1v1h-1zM10 10h1v1h-1zM0 11h5v1h-5zM6 11h2v1h-2zM9 11h2v1h-2z"/></symbol><symbol id="c81ea" viewBox="0 0 12 14" width="12" height="14"><path d="M4 1h1v1h-1zM2 2h7v1h-7zM2 3h1v1h-1zM8 3h1v1h-1zM2 4h1v1h-1zM8 4h1v1h-1zM2 5h7v1h-7zM2 6h1v1h-1zM8 6h1v1h-1zM2 7h7v1h-7zM2 8h1v1h-1zM8 8h1v1h-1zM2 9h1v1h-1zM8 9h1v1h-1zM2 10h7v1h-7zM2 11h1v1h-1zM8 11h1v1h-1z"/></symbol><symbol id="c83b7" viewBox="0 0 12 14" width="12" height="14"><path d="M3 1h1v1h-1zM7 1h1v1h-1zM0 2h11v1h-11zM3 3h1v1h-1zM7 3h1v1h-1zM1 4h1v1h-1zM3 4h1v1h-1zM7 4h2v1h-2zM2 5h1v1h-1zM7 5h1v1h-1zM9 5h1v1h-1zM1 6h1v1h-1zM3 6h1v1h-1zM5 6h6v1h-6zM0 7h1v1h-1zM3 7h1v1h-1zM7 7h1v1h-1zM2 8h2v1h-2zM7 8h1v1h-1zM1 9h1v1h-1zM3 9h1v1h-1zM6 9h1v1h-1zM8 9h1v1h-1zM3 10h1v1h-1zM5 10h1v1h-1zM9 10h1v1h-1zM1 11h2v1h-2zM4 11h1v1h-1zM10 11h1v1h-1z"/></symbol><symbol id="c884c" viewBox="0 0 12 14" width="12" height="14"><path d="M2 1h1v1h-1zM5 1h5v1h-5zM1 2h1v1h-1zM0 3h1v1h-1zM3 4h1v1h-1zM2 5h1v1h-1zM4 5h7v1h-7zM1 6h2v1h-2zM8 6h1v1h-1zM0 7h1v1h-1zM2 7h1v1h-1zM8 7h1v1h-1zM2 8h1v1h-1zM8 8h1v1h-1zM2 9h1v1h-1zM8 9h1v1h-1zM2 10h1v1h-1zM8 10h1v1h-1zM2 11h1v1h-1zM6 11h3v1h-3z"/></symbol><symbol id="c897f" viewBox="0 0 12 14" width="12" height="14"><path d="M0 2h11v1h-11zM4 3h1v1h-1zM6 3h1v1h-1zM1 4h9v1h-9zM1 5h1v1h-1zM4 5h1v1h-1zM6 5h1v1h-1zM9 5h1v1h-1zM1 6h1v1h-1zM4 6h1v1h-1zM6 6h1v1h-1zM9 6h1v1h-1zM1 7h1v1h-1zM3 7h1v1h-1zM6 7h1v1h-1zM9 7h1v1h-1zM1 8h2v1h-2zM7 8h3v1h-3zM1 9h1v1h-1zM9 9h1v1h-1zM1 10h9v1h-9zM1 11h1v1h-1zM9 11h1v1h-1z"/></symbol><symbol id="c89d2" viewBox="0 0 12 14" width="12" height="14"><path d="M3 1h1v1h-1zM3 2h5v1h-5zM2 3h1v1h-1zM6 3h1v1h-1zM1 4h9v1h-9zM0 5h1v1h-1zM2 5h1v1h-1zM5 5h1v1h-1zM9 5h1v1h-1zM2 6h8v1h-8zM2 7h1v1h-1zM5 7h1v1h-1zM9 7h1v1h-1zM2 8h8v1h-8zM2 9h1v1h-1zM5 9h1v1h-1zM9 9h1v1h-1zM1 10h1v1h-1zM5 10h1v1h-1zM7 10h1v1h-1zM9 10h1v1h-1zM0 11h1v1h-1zM8 11h1v1h-1z"/></symbol><symbol id="c8bbe" viewBox="0 0 12 14" width="12" height="14"><path d="M1 1h1v1h-1zM5 1h4v1h-4zM2 2h1v1h-1zM5 2h1v1h-1zM8 2h1v1h-1zM5 3h1v1h-1zM8 3h1v1h-1zM4 4h1v1h-1zM8 4h3v1h-3zM0 5h3v1h-3zM2 6h1v1h-1zM4 6h6v1h-6zM2 7h1v1h-1zM5 7h1v1h-1zM9 7h1v1h-1zM2 8h1v1h-1zM6 8h1v1h-1zM8 8h1v1h-1zM2 9h2v1h-2zM7 9h1v1h-1zM2 10h1v1h-1zM6 10h1v1h-1zM8 10h1v1h-1zM3 11h3v1h-3zM9 11h2v1h-2z"/></symbol><symbol id="c8c61" viewBox="0 0 12 14" width="12" height="14"><path d="M3 1h5v1h-5zM2 2h1v1h-1zM6 2h1v1h-1zM1 3h9v1h-9zM0 4h1v1h-1zM2 4h1v1h-1zM5 4h1v1h-1zM9 4h1v1h-1zM2 5h8v1h-8zM3 6h1v1h-1zM5 6h1v1h-1zM9 6h1v1h-1zM1 7h2v1h-2zM4 7h3v1h-3zM8 7h1v1h-1zM3 8h1v1h-1zM6 8h2v1h-2zM1 9h2v1h-2zM5 9h2v1h-2zM8 9h1v1h-1zM3 10h2v1h-2zM6 10h1v1h-1zM9 10h2v1h-2zM0 11h3v1h-3zM5 11h2v1h-2z"/></symbol><symbol id="c8f6c" viewBox="0 0 12 14" width="12" height="14"><path d="M2 1h1v1h-1zM7 1h1v1h-1zM0 2h4v1h-4zM5 2h5v1h-5zM1 3h1v1h-1zM7 3h1v1h-1zM1 4h2v1h-2zM4 4h7v1h-7zM0 5h1v1h-1zM2 5h1v1h-1zM6 5h1v1h-1zM0 6h4v1h-4zM5 6h5v1h-5zM2 7h1v1h-1zM9 7h1v1h-1zM2 8h3v1h-3zM6 8h1v1h-1zM8 8h1v1h-1zM0 9h3v1h-3zM7 9h1v1h-1zM2 10h1v1h-1zM8 10h1v1h-1zM2 11h1v1h-1zM8 11h1v1h-1z"/></symbol><symbol id="c8f6e" viewBox="0 0 12 14" width="12" height="14"><path d="M2 1h1v1h-1zM7 1h1v1h-1zM0 2h5v1h-5zM7 2h2v1h-2zM1 3h1v1h-1zM6 3h1v1h-1zM9 3h1v1h-1zM1 4h2v1h-2zM5 4h1v1h-1zM10 4h1v1h-1zM0 5h1v1h-1zM2 5h1v1h-1zM0 6h5v1h-5zM6 6h1v1h-1zM9 6h1v1h-1zM2 7h1v1h-1zM6 7h1v1h-1zM8 7h1v1h-1zM2 8h3v1h-3zM6 8h2v1h-2zM0 9h3v1h-3zM6 9h1v1h-1zM10 9h1v1h-1zM2 10h1v1h-1zM6 10h1v1h-1zM10 10h1v1h-1zM2 11h1v1h-1zM7 11h4v1h-4z"/></symbol><symbol id="c9009" viewBox="0 0 12 14" width="12" height="14"><path d="M1 1h1v1h-1zM5 1h1v1h-1zM7 1h1v1h-1zM2 2h1v1h-1zM5 2h1v1h-1zM7 2h1v1h-1zM2 3h1v1h-1zM5 3h5v1h-5zM4 4h1v1h-1zM7 4h1v1h-1zM0 5h3v1h-3zM4 5h7v1h-7zM2 6h1v1h-1zM6 6h1v1h-1zM8 6h1v1h-1zM2 7h1v1h-1zM6 7h1v1h-1zM8 7h1v1h-1zM10 7h1v1h-1zM2 8h1v1h-1zM5 8h1v1h-1zM8 8h1v1h-1zM10 8h1v1h-1zM2 9h1v1h-1zM4 9h1v1h-1zM9 9h2v1h-2zM1 10h1v1h-1zM3 10h1v1h-1zM0 11h1v1h-1zM4 11h7v1h-7z"/></symbol><symbol id="c901a" viewBox="0 0 12 14" width="12" height="14"><path d="M1 1h1v1h-1zM4 1h6v1h-6zM2 2h1v1h-1zM6 2h1v1h-1zM8 2h1v1h-1zM2 3h1v1h-1zM4 3h7v1h-7zM4 4h1v1h-1zM7 4h1v1h-1zM10 4h1v1h-1zM0 5h3v1h-3zM4 5h7v1h-7zM2 6h1v1h-1zM4 6h1v1h-1zM7 6h1v1h-1zM10 6h1v1h-1zM2 7h1v1h-1zM4 7h7v1h-7zM2 8h1v1h-1zM4 8h1v1h-1zM7 8h1v1h-1zM10 8h1v1h-1zM2 9h1v1h-1zM4 9h1v1h-1zM7 9h1v1h-1zM9 9h2v1h-2zM1 10h1v1h-1zM3 10h1v1h-1zM0 11h1v1h-1zM4 11h7v1h-7z"/></symbol><symbol id="c91cd" viewBox="0 0 12 14" width="12" height="14"><path d="M1 1h9v1h-9zM5 2h1v1h-1zM0 3h11v1h-11zM2 4h1v1h-1zM5 4h1v1h-1zM8 4h1v1h-1zM2 5h7v1h-7zM2 6h1v1h-1zM5 6h1v1h-1zM8 6h1v1h-1zM2 7h7v1h-7zM5 8h1v1h-1zM1 9h9v1h-9zM5 10h1v1h-1zM0 11h11v1h-11z"/></symbol><symbol id="c952e" viewBox="0 0 12 14" width="12" height="14"><path d="M1 1h1v1h-1zM3 1h3v1h-3zM8 1h1v1h-1zM1 2h1v1h-1zM5 2h6v1h-6zM1 3h2v1h-2zM4 3h1v1h-1zM8 3h1v1h-1zM10 3h1v1h-1zM0 4h1v1h-1zM4 4h1v1h-1zM6 4h5v1h-5zM0 5h6v1h-6zM8 5h1v1h-1zM10 5h1v1h-1zM1 6h1v1h-1zM5 6h6v1h-6zM0 7h3v1h-3zM5 7h1v1h-1zM8 7h1v1h-1zM1 8h1v1h-1zM3 8h1v1h-1zM5 8h6v1h-6zM1 9h1v1h-1zM4 9h1v1h-1zM8 9h1v1h-1zM1 10h2v1h-2zM4 10h2v1h-2zM8 10h1v1h-1zM1 11h1v1h-1zM3 11h1v1h-1zM6 11h5v1h-5z"/></symbol><symbol id="c957f" viewBox="0 0 12 14" width="12" height="14"><path d="M3 1h1v1h-1zM8 1h1v1h-1zM3 2h1v1h-1zM7 2h1v1h-1zM3 3h1v1h-1zM6 3h1v1h-1zM3 4h1v1h-1zM5 4h1v1h-1zM3 5h2v1h-2zM1 6h10v1h-10zM3 7h1v1h-1zM5 7h1v1h-1zM3 8h1v1h-1zM6 8h1v1h-1zM3 9h1v1h-1zM7 9h1v1h-1zM3 10h1v1h-1zM5 10h1v1h-1zM8 10h1v1h-1zM3 11h2v1h-2zM9 11h2v1h-2z"/></symbol><symbol id="c968f" viewBox="0 0 12 14" width="12" height="14"><path d="M0 1h3v1h-3zM7 1h1v1h-1zM0 2h1v1h-1zM2 2h2v1h-2zM5 2h6v1h-6zM0 3h1v1h-1zM2 3h1v1h-1zM4 3h1v1h-1zM6 3h1v1h-1zM0 4h2v1h-2zM5 4h5v1h-5zM0 5h1v1h-1zM2 5h1v1h-1zM6 5h1v1h-1zM9 5h1v1h-1zM0 6h1v1h-1zM2 6h3v1h-3zM6 6h4v1h-4zM0 7h1v1h-1zM2 7h1v1h-1zM4 7h1v1h-1zM6 7h1v1h-1zM9 7h1v1h-1zM0 8h2v1h-2zM4 8h1v1h-1zM6 8h4v1h-4zM0 9h1v1h-1zM4 9h1v1h-1zM6 9h1v1h-1zM9 9h1v1h-1zM0 10h1v1h-1zM4 10h2v1h-2zM0 11h1v1h-1zM3 11h1v1h-1zM6 11h5v1h-5z"/></symbol><symbol id="c9699" viewBox="0 0 12 14" width="12" height="14"><path d="M0 1h4v1h-4zM7 1h1v1h-1zM0 2h1v1h-1zM3 2h1v1h-1zM5 2h1v1h-1zM7 2h1v1h-1zM9 2h1v1h-1zM0 3h1v1h-1zM2 3h1v1h-1zM4 3h1v1h-1zM7 3h1v1h-1zM10 3h1v1h-1zM0 4h2v1h-2zM3 4h1v1h-1zM5 4h5v1h-5zM0 5h1v1h-1zM2 5h1v1h-1zM5 5h1v1h-1zM9 5h1v1h-1zM0 6h1v1h-1zM3 6h1v1h-1zM5 6h5v1h-5zM0 7h1v1h-1zM3 7h1v1h-1zM5 7h1v1h-1zM9 7h1v1h-1zM0 8h4v1h-4zM5 8h5v1h-5zM0 9h1v1h-1zM2 9h1v1h-1zM5 9h1v1h-1zM7 9h1v1h-1zM9 9h1v1h-1zM0 10h1v1h-1zM4 10h1v1h-1zM7 10h1v1h-1zM10 10h1v1h-1zM0 11h1v1h-1zM3 11h1v1h-1zM6 11h2v1h-2zM10 11h1v1h-1z"/></symbol></defs></svg>
<div class="abs" style="left:0;top:0;width:316px;height:14px;background:#7e9ce4"></div>
<div class="abs" style="left:312px;top:0;width:4px;height:602px;background:#7e9ce4"></div>
<div class="lbl" style="left:-1px;top:-4px;color:#fff"><span class="g"><b>地</b><svg width="12" height="14" fill="currentColor" shape-rendering="crispEdges"><use href="#c5730"/></svg></span><span class="g"><b>板</b><svg width="12" height="14" fill="currentColor" shape-rendering="crispEdges"><use href="#c677f"/></svg></span><span class="g"><b>生</b><svg width="12" height="14" fill="currentColor" shape-rendering="crispEdges"><use href="#c751f"/></svg></span><span class="g"><b>成</b><svg width="12" height="14" fill="currentColor" shape-rendering="crispEdges"><use href="#c6210"/></svg></span><span class="g"><b>器</b><svg width="12" height="14" fill="currentColor" shape-rendering="crispEdges"><use href="#c5668"/></svg></span></div>
<div class="abs" style="left:297px;top:-2px;width:17px;height:12px;background:#b47a92;border:1px solid #e8e8f0"></div>
<svg class="abs" style="left:297px;top:0" width="17" height="10"><path d="M5.5 -2.5 L12 4.5 M12 -2.5 L5.5 4.5" stroke="#fff" stroke-width="2.3"/></svg>
<div class="grp" style="left:-3px;top:22px;width:313px;height:110px"></div>
<div class="gl" style="left:6px;top:16px"><span class="g"><b>尺</b><svg width="12" height="14" fill="currentColor" shape-rendering="crispEdges"><use href="#c5c3a"/></svg></span><span class="g"><b>寸</b><svg width="12" height="14" fill="currentColor" shape-rendering="crispEdges"><use href="#c5bf8"/></svg></span></div>
<div class="lbl" style="left:86px;top:31px"><span class="g"><b>最</b><svg width="12" height="14" fill="currentColor" shape-rendering="crispEdges"><use href="#c6700"/></svg></span><span class="g"><b>大</b><svg width="12" height="14" fill="currentColor" shape-rendering="crispEdges"><use href="#c5927"/></svg></span></div>
<div class="lbl" style="left:176px;top:31px"><span class="g"><b>最</b><svg width="12" height="14" fill="currentColor" shape-rendering="crispEdges"><use href="#c6700"/></svg></span><span class="g"><b>小</b><svg width="12" height="14" fill="currentColor" shape-rendering="crispEdges"><use href="#c5c0f"/></svg></span></div>
<div class="lbl" style="left:254px;top:31px"><span class="g"><b>散</b><svg width="12" height="14" fill="currentColor" shape-rendering="crispEdges"><use href="#c6563"/></svg></span><span class="g"><b>布</b><svg width="12" height="14" fill="currentColor" shape-rendering="crispEdges"><use href="#c5e03"/></svg></span></div>
<div class="lbl" style="left:44px;top:49px"><span class="g"><b>长</b><svg width="12" height="14" fill="currentColor" shape-rendering="crispEdges"><use href="#c957f"/></svg></span><span class="g"><b>度</b><svg width="12" height="14" fill="currentColor" shape-rendering="crispEdges"><use href="#c5ea6"/></svg></span></div>
<div class="inp" style="left:80px;top:49px;width:57px;height:16px"><span>1000.0</span></div>
<div class="spn" style="left:138px;top:49px;height:16px"></div>
<div class="inp d" style="left:172px;top:49px;width:57px;height:16px"><span>1000.0</span></div>
<div class="spn" style="left:230px;top:49px;height:16px"></div>
<div class="inp" style="left:251px;top:49px;width:43px;height:16px"><span>0.5</span></div>
<div class="spn" style="left:295px;top:49px;height:16px"></div>
<div class="lbl" style="left:44px;top:69px"><span class="g"><b>宽</b><svg width="12" height="14" fill="currentColor" shape-rendering="crispEdges"><use href="#c5bbd"/></svg></span><span class="g"><b>度</b><svg width="12" height="14" fill="currentColor" shape-rendering="crispEdges"><use href="#c5ea6"/></svg></span></div>
<div class="inp" style="left:80px;top:69px;width:57px;height:16px"><span>70.0</span></div>
<div class="spn" style="left:138px;top:69px;height:16px"></div>
<div class="inp d" style="left:172px;top:69px;width:57px;height:16px"><span>70.0</span></div>
<div class="spn" style="left:230px;top:69px;height:16px"></div>
<div class="inp" style="left:251px;top:69px;width:43px;height:16px"><span>0.5</span></div>
<div class="spn" style="left:295px;top:69px;height:16px"></div>
<div class="Lb" style="left:152px;top:49px">L</div>
<div class="Lb" style="left:152px;top:69px">L</div>
<div class="lbl" style="left:14px;top:91px"><span class="g"><b>缝</b><svg width="12" height="14" fill="currentColor" shape-rendering="crispEdges"><use href="#c7f1d"/></svg></span><span class="g"><b>隙</b><svg width="12" height="14" fill="currentColor" shape-rendering="crispEdges"><use href="#c9699"/></svg></span><span class="sp"> </span><span class="g"><b>长</b><svg width="12" height="14" fill="currentColor" shape-rendering="crispEdges"><use href="#c957f"/></svg></span><span class="g"><b>度</b><svg width="12" height="14" fill="currentColor" shape-rendering="crispEdges"><use href="#c5ea6"/></svg></span></div>
<div class="inp" style="left:80px;top:91px;width:57px;height:16px"><span>0.2</span></div>
<div class="spn" style="left:138px;top:91px;height:16px"></div>
<div class="lbl dis" style="left:14px;top:111px"><span class="g"><b>缝</b><svg width="12" height="14" fill="currentColor" shape-rendering="crispEdges"><use href="#c7f1d"/></svg></span><span class="g"><b>隙</b><svg width="12" height="14" fill="currentColor" shape-rendering="crispEdges"><use href="#c9699"/></svg></span><span class="sp"> </span><span class="g"><b>宽</b><svg width="12" height="14" fill="currentColor" shape-rendering="crispEdges"><use href="#c5bbd"/></svg></span><span class="g"><b>度</b><svg width="12" height="14" fill="currentColor" shape-rendering="crispEdges"><use href="#c5ea6"/></svg></span></div>
<div class="inp d" style="left:80px;top:111px;width:57px;height:16px"><span>0.2</span></div>
<div class="spn" style="left:138px;top:111px;height:16px"></div>
<div class="Lb" style="left:152px;top:101px">L</div>
<div class="grp" style="left:-3px;top:142px;width:313px;height:130px"></div>
<div class="gl" style="left:6px;top:136px"><span class="g"><b>每</b><svg width="12" height="14" fill="currentColor" shape-rendering="crispEdges"><use href="#c6bcf"/></svg></span><span class="g"><b>块</b><svg width="12" height="14" fill="currentColor" shape-rendering="crispEdges"><use href="#c5757"/></svg></span><span class="g"><b>地</b><svg width="12" height="14" fill="currentColor" shape-rendering="crispEdges"><use href="#c5730"/></svg></span><span class="g"><b>板</b><svg width="12" height="14" fill="currentColor" shape-rendering="crispEdges"><use href="#c677f"/></svg></span><span class="g"><b>变</b><svg width="12" height="14" fill="currentColor" shape-rendering="crispEdges"><use href="#c53d8"/></svg></span><span class="g"><b>化</b><svg width="12" height="14" fill="currentColor" shape-rendering="crispEdges"><use href="#c5316"/></svg></span></div>
<div class="lbl" style="left:86px;top:151px"><span class="g"><b>最</b><svg width="12" height="14" fill="currentColor" shape-rendering="crispEdges"><use href="#c6700"/></svg></span><span class="g"><b>大</b><svg width="12" height="14" fill="currentColor" shape-rendering="crispEdges"><use href="#c5927"/></svg></span></div>
<div class="lbl" style="left:178px;top:151px"><span class="g"><b>最</b><svg width="12" height="14" fill="currentColor" shape-rendering="crispEdges"><use href="#c6700"/></svg></span><span class="g"><b>小</b><svg width="12" height="14" fill="currentColor" shape-rendering="crispEdges"><use href="#c5c0f"/></svg></span></div>
<div class="lbl" style="left:254px;top:151px"><span class="g"><b>散</b><svg width="12" height="14" fill="currentColor" shape-rendering="crispEdges"><use href="#c6563"/></svg></span><span class="g"><b>布</b><svg width="12" height="14" fill="currentColor" shape-rendering="crispEdges"><use href="#c5e03"/></svg></span></div>
<div class="lbl" style="left:36px;top:169px"><span class="g"><b>旋</b><svg width="12" height="14" fill="currentColor" shape-rendering="crispEdges"><use href="#c65cb"/></svg></span><span class="g"><b>转</b><svg width="12" height="14" fill="currentColor" shape-rendering="crispEdges"><use href="#c8f6c"/></svg></span> <span class="lt">%</span></div>
<div class="inp" style="left:80px;top:169px;width:57px;height:16px"><span>0.0</span></div>
<div class="spn" style="left:138px;top:169px;height:16px"></div>
<div class="inp" style="left:172px;top:169px;width:57px;height:16px"><span>0.0</span></div>
<div class="spn" style="left:230px;top:169px;height:16px"></div>
<div class="inp" style="left:251px;top:169px;width:43px;height:16px"><span>0.5</span></div>
<div class="spn" style="left:295px;top:169px;height:16px"></div>
<div class="lbl" style="left:36px;top:189px"><span class="g"><b>偏</b><svg width="12" height="14" fill="currentColor" shape-rendering="crispEdges"><use href="#c504f"/></svg></span><span class="g"><b>移</b><svg width="12" height="14" fill="currentColor" shape-rendering="crispEdges"><use href="#c79fb"/></svg></span> <span class="lt">X</span></div>
<div class="inp" style="left:80px;top:189px;width:57px;height:16px"><span>0.0</span></div>
<div class="spn" style="left:138px;top:189px;height:16px"></div>
<div class="inp" style="left:172px;top:189px;width:57px;height:16px"><span>0.0</span></div>
<div class="spn" style="left:230px;top:189px;height:16px"></div>
<div class="inp" style="left:251px;top:189px;width:43px;height:16px"><span>0.5</span></div>
<div class="spn" style="left:295px;top:189px;height:16px"></div>
<div class="lbl dis" style="left:36px;top:209px"><span class="g"><b>偏</b><svg width="12" height="14" fill="currentColor" shape-rendering="crispEdges"><use href="#c504f"/></svg></span><span class="g"><b>移</b><svg width="12" height="14" fill="currentColor" shape-rendering="crispEdges"><use href="#c79fb"/></svg></span> <span>Y</span></div>
<div class="inp d" style="left:80px;top:209px;width:57px;height:16px"><span>0.0</span></div>
<div class="spn" style="left:138px;top:209px;height:16px"></div>
<div class="inp d" style="left:172px;top:209px;width:57px;height:16px"><span>0.0</span></div>
<div class="spn" style="left:230px;top:209px;height:16px"></div>
<div class="inp d" style="left:251px;top:209px;width:43px;height:16px"><span>0.5</span></div>
<div class="spn" style="left:295px;top:209px;height:16px"></div>
<div class="lbl" style="left:36px;top:229px"><span class="g"><b>倾</b><svg width="12" height="14" fill="currentColor" shape-rendering="crispEdges"><use href="#c503e"/></svg></span><span class="g"><b>斜</b><svg width="12" height="14" fill="currentColor" shape-rendering="crispEdges"><use href="#c659c"/></svg></span></div>
<div class="inp" style="left:80px;top:229px;width:57px;height:16px"><span>0.0</span></div>
<div class="spn" style="left:138px;top:229px;height:16px"></div>
<div class="inp" style="left:172px;top:229px;width:57px;height:16px"><span>0.0</span></div>
<div class="spn" style="left:230px;top:229px;height:16px"></div>
<div class="inp" style="left:251px;top:229px;width:43px;height:16px"><span>0.5</span></div>
<div class="spn" style="left:295px;top:229px;height:16px"></div>
<div class="lbl" style="left:12px;top:251px"><span class="g"><b>最</b><svg width="12" height="14" fill="currentColor" shape-rendering="crispEdges"><use href="#c6700"/></svg></span><span class="g"><b>大</b><svg width="12" height="14" fill="currentColor" shape-rendering="crispEdges"><use href="#c5927"/></svg></span><span class="g"><b>重</b><svg width="12" height="14" fill="currentColor" shape-rendering="crispEdges"><use href="#c91cd"/></svg></span><span class="g"><b>叠</b><svg width="12" height="14" fill="currentColor" shape-rendering="crispEdges"><use href="#c53e0"/></svg></span></div>
<div class="inp" style="left:80px;top:251px;width:57px;height:16px"><span>0.0</span></div>
<div class="spn" style="left:138px;top:251px;height:16px"></div>
<div class="Lb" style="left:152px;top:200px">L</div>
<div class="grp" style="left:-3px;top:282px;width:313px;height:76px"></div>
<div class="gl" style="left:6px;top:276px"><span class="g"><b>通</b><svg width="12" height="14" fill="currentColor" shape-rendering="crispEdges"><use href="#c901a"/></svg></span><span class="g"><b>用</b><svg width="12" height="14" fill="currentColor" shape-rendering="crispEdges"><use href="#c7528"/></svg></span></div>
<div class="lbl" style="left:35px;top:296px"><span class="g"><b>比</b><svg width="12" height="14" fill="currentColor" shape-rendering="crispEdges"><use href="#c6bd4"/></svg></span><span class="g"><b>例</b><svg width="12" height="14" fill="currentColor" shape-rendering="crispEdges"><use href="#c4f8b"/></svg></span> <span class="lt">%</span></div>
<div class="inp" style="left:80px;top:296px;width:57px;height:16px"><span>100.0</span></div>
<div class="spn" style="left:138px;top:296px;height:16px"></div>
<div class="lbl" style="left:29px;top:316px"><span class="g"><b>方</b><svg width="12" height="14" fill="currentColor" shape-rendering="crispEdges"><use href="#c65b9"/></svg></span><span class="g"><b>向</b><svg width="12" height="14" fill="currentColor" shape-rendering="crispEdges"><use href="#c5411"/></svg></span></div>
<div class="inp" style="left:80px;top:316px;width:57px;height:16px"><span>0.0</span></div>
<div class="spn" style="left:138px;top:316px;height:16px"></div>
<div class="lbl" style="left:22px;top:336px"><span class="g"><b>行</b><svg width="12" height="14" fill="currentColor" shape-rendering="crispEdges"><use href="#c884c"/></svg></span><span class="g"><b>偏</b><svg width="12" height="14" fill="currentColor" shape-rendering="crispEdges"><use href="#c504f"/></svg></span><span class="g"><b>移</b><svg width="12" height="14" fill="currentColor" shape-rendering="crispEdges"><use href="#c79fb"/></svg></span> <span class="lt">%</span></div>
<div class="inp" style="left:80px;top:336px;width:57px;height:16px"><span>20.0</span></div>
<div class="spn" style="left:138px;top:336px;height:16px"></div>
<div class="lbl" style="left:206px;top:296px"><span class="g"><b>种</b><svg width="12" height="14" fill="currentColor" shape-rendering="crispEdges"><use href="#c79cd"/></svg></span><span class="g"><b>子</b><svg width="12" height="14" fill="currentColor" shape-rendering="crispEdges"><use href="#c5b50"/></svg></span></div>
<div class="inp" style="left:236px;top:296px;width:56px;height:16px"><span>12345</span></div>
<div class="spn" style="left:293px;top:296px;height:16px"></div>
<div class="lbl" style="left:193px;top:316px"><span class="g"><b>偏</b><svg width="12" height="14" fill="currentColor" shape-rendering="crispEdges"><use href="#c504f"/></svg></span><span class="g"><b>移</b><svg width="12" height="14" fill="currentColor" shape-rendering="crispEdges"><use href="#c79fb"/></svg></span> <span class="lt">X</span></div>
<div class="inp" style="left:236px;top:316px;width:56px;height:16px"><span>0.0</span></div>
<div class="spn" style="left:293px;top:316px;height:16px"></div>
<div class="lbl" style="left:193px;top:336px"><span class="g"><b>偏</b><svg width="12" height="14" fill="currentColor" shape-rendering="crispEdges"><use href="#c504f"/></svg></span><span class="g"><b>移</b><svg width="12" height="14" fill="currentColor" shape-rendering="crispEdges"><use href="#c79fb"/></svg></span> <span class="lt">Y</span></div>
<div class="inp" style="left:236px;top:336px;width:56px;height:16px"><span>0.0</span></div>
<div class="spn" style="left:293px;top:336px;height:16px"></div>
<div class="grp" style="left:-3px;top:368px;width:313px;height:94px"></div>
<div class="gl" style="left:6px;top:362px"><span class="g"><b>挤</b><svg width="12" height="14" fill="currentColor" shape-rendering="crispEdges"><use href="#c6324"/></svg></span><span class="g"><b>出</b><svg width="12" height="14" fill="currentColor" shape-rendering="crispEdges"><use href="#c51fa"/></svg></span> <span style="font-size:11px">/</span> <span class="g"><b>倒</b><svg width="12" height="14" fill="currentColor" shape-rendering="crispEdges"><use href="#c5012"/></svg></span><span class="g"><b>角</b><svg width="12" height="14" fill="currentColor" shape-rendering="crispEdges"><use href="#c89d2"/></svg></span> <span style="font-size:11px">/</span> <span class="g"><b>焊</b><svg width="12" height="14" fill="currentColor" shape-rendering="crispEdges"><use href="#c710a"/></svg></span><span class="g"><b>接</b><svg width="12" height="14" fill="currentColor" shape-rendering="crispEdges"><use href="#c63a5"/></svg></span> <span style="font-size:11px">/ UV</span></div>
<div class="cb" style="left:4px;top:383px"></div>
<div class="lbl" style="left:21px;top:383px"><span class="g"><b>焊</b><svg width="12" height="14" fill="currentColor" shape-rendering="crispEdges"><use href="#c710a"/></svg></span><span class="g"><b>接</b><svg width="12" height="14" fill="currentColor" shape-rendering="crispEdges"><use href="#c63a5"/></svg></span></div>
<div class="tx lt" style="right:721px;top:384px;font-size:11px;color:#c8d4e4">Thr.</div>
<div class="inp" style="left:80px;top:382px;width:57px;height:16px"><span>0.05</span></div>
<div class="spn" style="left:138px;top:382px;height:16px"></div>
<div class="cb" style="left:4px;top:403px"></div>
<svg class="abs" style="left:4px;top:403px" width="13" height="13"><path d="M3.5 6.5 L5.8 9 L10 4" stroke="#f4f0f0" stroke-width="1.8" fill="none"/></svg>
<div class="lbl" style="left:21px;top:403px"><span class="g"><b>挤</b><svg width="12" height="14" fill="currentColor" shape-rendering="crispEdges"><use href="#c6324"/></svg></span><span class="g"><b>出</b><svg width="12" height="14" fill="currentColor" shape-rendering="crispEdges"><use href="#c51fa"/></svg></span></div>
<div class="tx lt" style="right:721px;top:404px;font-size:11px;color:#c8d4e4">H.</div>
<div class="inp" style="left:80px;top:402px;width:57px;height:16px"><span>1.0</span></div>
<div class="spn" style="left:138px;top:402px;height:16px"></div>
<div class="cb" style="left:4px;top:423px"></div>
<svg class="abs" style="left:4px;top:423px" width="13" height="13"><path d="M3.5 6.5 L5.8 9 L10 4" stroke="#f4f0f0" stroke-width="1.8" fill="none"/></svg>
<div class="lbl" style="left:21px;top:423px"><span class="g"><b>倒</b><svg width="12" height="14" fill="currentColor" shape-rendering="crispEdges"><use href="#c5012"/></svg></span><span class="g"><b>角</b><svg width="12" height="14" fill="currentColor" shape-rendering="crispEdges"><use href="#c89d2"/></svg></span></div>
<div class="tx lt" style="right:721px;top:424px;font-size:11px;color:#c8d4e4">H.</div>
<div class="inp" style="left:80px;top:422px;width:57px;height:16px"><span>0.5</span></div>
<div class="spn" style="left:138px;top:422px;height:16px"></div>
<div class="lbl" style="left:21px;top:443px"><span class="g"><b>轮</b><svg width="12" height="14" fill="currentColor" shape-rendering="crispEdges"><use href="#c8f6e"/></svg></span><span class="g"><b>廓</b><svg width="12" height="14" fill="currentColor" shape-rendering="crispEdges"><use href="#c5ed3"/></svg></span></div>
<div class="inp d" style="left:80px;top:442px;width:57px;height:16px"><span>0.5</span></div>
<div class="spn" style="left:138px;top:442px;height:16px"></div>
<div class="Lb" style="left:152px;top:432px">L</div>
<div class="cb" style="left:171px;top:383px"></div>
<svg class="abs" style="left:171px;top:383px" width="13" height="13"><path d="M3.5 6.5 L5.8 9 L10 4" stroke="#f4f0f0" stroke-width="1.8" fill="none"/></svg>
<div class="lbl" style="left:188px;top:383px"><span class="g"><b>随</b><svg width="12" height="14" fill="currentColor" shape-rendering="crispEdges"><use href="#c968f"/></svg></span><span class="g"><b>机</b><svg width="12" height="14" fill="currentColor" shape-rendering="crispEdges"><use href="#c673a"/></svg></span><span class="g"><b>翻</b><svg width="12" height="14" fill="currentColor" shape-rendering="crispEdges"><use href="#c7ffb"/></svg></span><span class="g"><b>转</b><svg width="12" height="14" fill="currentColor" shape-rendering="crispEdges"><use href="#c8f6c"/></svg></span> <span class="lt">U</span></div>
<div class="cb" style="left:171px;top:403px"></div>
<svg class="abs" style="left:171px;top:403px" width="13" height="13"><path d="M3.5 6.5 L5.8 9 L10 4" stroke="#f4f0f0" stroke-width="1.8" fill="none"/></svg>
<div class="lbl" style="left:188px;top:403px"><span class="g"><b>随</b><svg width="12" height="14" fill="currentColor" shape-rendering="crispEdges"><use href="#c968f"/></svg></span><span class="g"><b>机</b><svg width="12" height="14" fill="currentColor" shape-rendering="crispEdges"><use href="#c673a"/></svg></span><span class="g"><b>翻</b><svg width="12" height="14" fill="currentColor" shape-rendering="crispEdges"><use href="#c7ffb"/></svg></span><span class="g"><b>转</b><svg width="12" height="14" fill="currentColor" shape-rendering="crispEdges"><use href="#c8f6c"/></svg></span> <span class="lt">V</span></div>
<div class="cb" style="left:171px;top:423px"></div>
<svg class="abs" style="left:171px;top:423px" width="13" height="13"><path d="M3.5 6.5 L5.8 9 L10 4" stroke="#f4f0f0" stroke-width="1.8" fill="none"/></svg>
<div class="lbl" style="left:188px;top:423px"><span class="g"><b>随</b><svg width="12" height="14" fill="currentColor" shape-rendering="crispEdges"><use href="#c968f"/></svg></span><span class="g"><b>机</b><svg width="12" height="14" fill="currentColor" shape-rendering="crispEdges"><use href="#c673a"/></svg></span><span class="g"><b>偏</b><svg width="12" height="14" fill="currentColor" shape-rendering="crispEdges"><use href="#c504f"/></svg></span><span class="g"><b>移</b><svg width="12" height="14" fill="currentColor" shape-rendering="crispEdges"><use href="#c79fb"/></svg></span> <span class="lt">U</span></div>
<div class="cb" style="left:171px;top:443px"></div>
<svg class="abs" style="left:171px;top:443px" width="13" height="13"><path d="M3.5 6.5 L5.8 9 L10 4" stroke="#f4f0f0" stroke-width="1.8" fill="none"/></svg>
<div class="lbl" style="left:188px;top:443px"><span class="g"><b>随</b><svg width="12" height="14" fill="currentColor" shape-rendering="crispEdges"><use href="#c968f"/></svg></span><span class="g"><b>机</b><svg width="12" height="14" fill="currentColor" shape-rendering="crispEdges"><use href="#c673a"/></svg></span><span class="g"><b>偏</b><svg width="12" height="14" fill="currentColor" shape-rendering="crispEdges"><use href="#c504f"/></svg></span><span class="g"><b>移</b><svg width="12" height="14" fill="currentColor" shape-rendering="crispEdges"><use href="#c79fb"/></svg></span> <span class="lt">V</span></div>
<div class="lbl" style="left:83px;top:467px"><span class="g"><b>地</b><svg width="12" height="14" fill="currentColor" shape-rendering="crispEdges"><use href="#c5730"/></svg></span><span class="g"><b>板</b><svg width="12" height="14" fill="currentColor" shape-rendering="crispEdges"><use href="#c677f"/></svg></span><span class="g"><b>模</b><svg width="12" height="14" fill="currentColor" shape-rendering="crispEdges"><use href="#c6a21"/></svg></span><span class="g"><b>块</b><svg width="12" height="14" fill="currentColor" shape-rendering="crispEdges"><use href="#c5757"/></svg></span><span style="font-size:11px;color:#d8dde6">: &lt; Rectangle001 &gt;</span></div>
<div class="btn" style="left:-3px;top:486px;width:157px;height:21px"></div>
<div class="btn" style="left:155px;top:486px;width:155px;height:21px"></div>
<div class="btn" style="left:-3px;top:510px;width:157px;height:21px"></div>
<div class="btn" style="left:155px;top:510px;width:154px;height:20px;background:#3b7fdc;border:1px solid #3a3a3a;border-top:2px solid #0e0e0e;border-left:2px solid #0e0e0e;border-bottom-width:1px"></div>
<div class="lbl" style="left:63px;top:490px"><span class="g"><b>生</b><svg width="12" height="14" fill="currentColor" shape-rendering="crispEdges"><use href="#c751f"/></svg></span><span class="g"><b>成</b><svg width="12" height="14" fill="currentColor" shape-rendering="crispEdges"><use href="#c6210"/></svg></span></div>
<div class="lbl" style="left:207px;top:490px"><span class="g"><b>获</b><svg width="12" height="14" fill="currentColor" shape-rendering="crispEdges"><use href="#c83b7"/></svg></span><span class="g"><b>取</b><svg width="12" height="14" fill="currentColor" shape-rendering="crispEdges"><use href="#c53d6"/></svg></span><span class="g"><b>设</b><svg width="12" height="14" fill="currentColor" shape-rendering="crispEdges"><use href="#c8bbe"/></svg></span><span class="g"><b>置</b><svg width="12" height="14" fill="currentColor" shape-rendering="crispEdges"><use href="#c7f6e"/></svg></span></div>
<div class="lbl" style="left:63px;top:514px"><span class="g"><b>更</b><svg width="12" height="14" fill="currentColor" shape-rendering="crispEdges"><use href="#c66f4"/></svg></span><span class="g"><b>新</b><svg width="12" height="14" fill="currentColor" shape-rendering="crispEdges"><use href="#c65b0"/></svg></span></div>
<div class="lbl" style="left:208px;top:515px;color:#eef"><span class="g"><b>实</b><svg width="12" height="14" fill="currentColor" shape-rendering="crispEdges"><use href="#c5b9e"/></svg></span><span class="g"><b>时</b><svg width="12" height="14" fill="currentColor" shape-rendering="crispEdges"><use href="#c65f6"/></svg></span><span class="g"><b>更</b><svg width="12" height="14" fill="currentColor" shape-rendering="crispEdges"><use href="#c66f4"/></svg></span><span class="g"><b>新</b><svg width="12" height="14" fill="currentColor" shape-rendering="crispEdges"><use href="#c65b0"/></svg></span></div>
<div class="tx" style="left:85px;top:537px">FloorGenerator Version 1.00</div>
<div class="tx" style="left:73px;top:555px">Created by &nbsp;<span style="text-decoration:underline">www.cg-source.com</span></div>
<div class="tx" style="left:70px;top:575px">The source to HighQuality textures</div>
<div class="tx" style="left:100px;top:593px;color:#181818">Translator by <span class="g"><b>小</b><svg width="12" height="14" fill="currentColor" shape-rendering="crispEdges"><use href="#c5c0f"/></svg></span><span class="g"><b>一</b><svg width="12" height="14" fill="currentColor" shape-rendering="crispEdges"><use href="#c4e00"/></svg></span></div>
<div class="abs" style="left:316px;top:0;width:480px;height:9px;background:#444"></div>
<div class="abs" style="left:316px;top:9px;width:480px;height:1px;background:#1a1a1a"></div>
<svg class="abs" style="left:0;top:0" width="796" height="12"><rect x="316" y="0" width="24" height="4.5" fill="#3a80dc"/><rect x="316" y="4.5" width="25" height="1" fill="#2e2e2e"/><path d="M327 0 L329 2 L331 0 Z" fill="#fff"/><ellipse cx="357" cy="0" rx="5" ry="1.8" fill="#e8e8e8"/><rect x="379" y="0" width="12" height="1.5" fill="#384050"/><rect x="391" y="0" width="11" height="1.8" fill="#2a6ad0"/><path d="M400 4 L404 0.5" stroke="#fff" stroke-width="1.3"/><path d="M503 4 L506.5 0.5" stroke="#fff" stroke-width="1.3"/><path d="M610 4 L614 0.5" stroke="#fff" stroke-width="1.3"/><rect x="485" y="0" width="1.5" height="1" fill="#e02020"/><circle cx="529" cy="0" r="2" fill="#777"/><rect x="620" y="0" width="3" height="1.5" fill="#667"/><rect x="625" y="0" width="3" height="1.5" fill="#667"/><rect x="667" y="0" width="3" height="1.5" fill="#667"/><rect x="672" y="0" width="3" height="1.5" fill="#667"/><rect x="698" y="0" width="3" height="1.5" fill="#667"/><rect x="704" y="0" width="3" height="1.5" fill="#667"/><rect x="723" y="0" width="5" height="1.5" fill="#eee"/><rect x="730" y="0" width="6" height="1.5" fill="#eee"/><rect x="738" y="0" width="5" height="1.5" fill="#eee"/></svg>
<div class="abs" style="left:316px;top:10px;width:480px;height:2px;background:#8c7636"></div>
<div class="abs" style="left:316px;top:12px;width:480px;height:522px;background:linear-gradient(#1d1d1d 0%,#282828 26.4%,#2d2d2d 39.8%,#323232 51.3%,#393939 64.8%,#3d3d3d 76.2%,#404040 100%)"></div>
<div class="abs" style="left:316px;top:534px;width:480px;height:2px;background:#8c7636"></div>
<div class="abs" style="left:316px;top:536px;width:480px;height:18px;background:#444"></div>
<div class="abs" style="left:316px;top:536px;width:26px;height:17px;background:#3c3c3c;border-right:2px solid #1a1a1a;border-bottom:2px solid #1a1a1a"></div>
<div class="abs" style="left:342px;top:536px;width:16px;height:17px;background:#444;border-right:1px solid #1a1a1a;border-bottom:1px solid #1a1a1a;border-left:1px solid #2a2a2a;color:#d8e0ea;font-size:11px;line-height:16px;text-align:center">&gt;</div>
<div class="abs" style="left:316px;top:554px;width:437px;height:27px;background:#2c2c2c"></div>
<div class="abs" style="left:316px;top:553px;width:480px;height:1px;background:#222"></div>
<svg class="abs" style="left:0;top:0" width="796" height="602"><path d="M323.4 555 V566.5" stroke="#8a8a8a" stroke-width="1"/><path d="M333.3 555 V566.5" stroke="#8a8a8a" stroke-width="1"/><path d="M343.3 555 V566.5" stroke="#8a8a8a" stroke-width="1"/><path d="M353.2 555 V581" stroke="#8a8a8a" stroke-width="1"/><path d="M363.2 555 V566.5" stroke="#8a8a8a" stroke-width="1"/><path d="M373.1 555 V566.5" stroke="#8a8a8a" stroke-width="1"/><path d="M383.0 555 V566.5" stroke="#8a8a8a" stroke-width="1"/><path d="M393.0 555 V566.5" stroke="#8a8a8a" stroke-width="1"/><path d="M402.9 555 V581" stroke="#8a8a8a" stroke-width="1"/><path d="M412.9 555 V566.5" stroke="#8a8a8a" stroke-width="1"/><path d="M422.8 555 V566.5" stroke="#8a8a8a" stroke-width="1"/><path d="M432.7 555 V566.5" stroke="#8a8a8a" stroke-width="1"/><path d="M442.7 555 V566.5" stroke="#8a8a8a" stroke-width="1"/><path d="M452.6 555 V581" stroke="#8a8a8a" stroke-width="1"/><path d="M462.6 555 V566.5" stroke="#8a8a8a" stroke-width="1"/><path d="M472.5 555 V566.5" stroke="#8a8a8a" stroke-width="1"/><path d="M482.4 555 V566.5" stroke="#8a8a8a" stroke-width="1"/><path d="M492.4 555 V566.5" stroke="#8a8a8a" stroke-width="1"/><path d="M502.3 555 V581" stroke="#8a8a8a" stroke-width="1"/><path d="M512.3 555 V566.5" stroke="#8a8a8a" stroke-width="1"/><path d="M522.2 555 V566.5" stroke="#8a8a8a" stroke-width="1"/><path d="M532.1 555 V566.5" stroke="#8a8a8a" stroke-width="1"/><path d="M542.1 555 V566.5" stroke="#8a8a8a" stroke-width="1"/><path d="M552.0 555 V581" stroke="#8a8a8a" stroke-width="1"/><path d="M562.0 555 V566.5" stroke="#8a8a8a" stroke-width="1"/><path d="M571.9 555 V566.5" stroke="#8a8a8a" stroke-width="1"/><path d="M581.8 555 V566.5" stroke="#8a8a8a" stroke-width="1"/><path d="M591.8 555 V566.5" stroke="#8a8a8a" stroke-width="1"/><path d="M601.7 555 V581" stroke="#8a8a8a" stroke-width="1"/><path d="M611.7 555 V566.5" stroke="#8a8a8a" stroke-width="1"/><path d="M621.6 555 V566.5" stroke="#8a8a8a" stroke-width="1"/><path d="M631.5 555 V566.5" stroke="#8a8a8a" stroke-width="1"/><path d="M641.5 555 V566.5" stroke="#8a8a8a" stroke-width="1"/><path d="M651.4 555 V581" stroke="#8a8a8a" stroke-width="1"/><path d="M661.4 555 V566.5" stroke="#8a8a8a" stroke-width="1"/><path d="M671.3 555 V566.5" stroke="#8a8a8a" stroke-width="1"/><path d="M681.2 555 V566.5" stroke="#8a8a8a" stroke-width="1"/><path d="M691.2 555 V566.5" stroke="#8a8a8a" stroke-width="1"/><path d="M701.1 555 V581" stroke="#8a8a8a" stroke-width="1"/><path d="M711.1 555 V566.5" stroke="#8a8a8a" stroke-width="1"/><path d="M721.0 555 V566.5" stroke="#8a8a8a" stroke-width="1"/><path d="M730.9 555 V566.5" stroke="#8a8a8a" stroke-width="1"/><path d="M740.9 555 V566.5" stroke="#8a8a8a" stroke-width="1"/><path d="M750.8 555 V581" stroke="#8a8a8a" stroke-width="1"/></svg>
<div class="tx" style="left:338.5px;top:569px;width:30px;text-align:center;color:#c8d4e4">20</div>
<div class="tx" style="left:388.2px;top:569px;width:30px;text-align:center;color:#c8d4e4">30</div>
<div class="tx" style="left:437.9px;top:569px;width:30px;text-align:center;color:#c8d4e4">40</div>
<div class="tx" style="left:487.6px;top:569px;width:30px;text-align:center;color:#c8d4e4">50</div>
<div class="tx" style="left:537.3px;top:569px;width:30px;text-align:center;color:#c8d4e4">60</div>
<div class="tx" style="left:587.0px;top:569px;width:30px;text-align:center;color:#c8d4e4">70</div>
<div class="tx" style="left:636.7px;top:569px;width:30px;text-align:center;color:#c8d4e4">80</div>
<div class="tx" style="left:686.4px;top:569px;width:30px;text-align:center;color:#c8d4e4">90</div>
<div class="tx" style="left:736.1px;top:569px;width:30px;text-align:center;color:#c8d4e4">100</div>
<div class="abs" style="left:316px;top:581px;width:480px;height:21px;background:#444"></div>
<svg class="abs" style="left:316px;top:586px" width="10" height="16"><circle cx="4.5" cy="6" r="4.5" fill="#d47a80"/><path d="M4.5 10 V16" stroke="#ddd" stroke-width="1.5"/></svg>
<svg class="abs" style="left:340px;top:588px" width="12" height="14"><path d="M2.5 7 V4.5 A3.5 3.5 0 0 1 9.5 4.5 V7" stroke="#e0e0e0" stroke-width="1.6" fill="none"/><rect x="1" y="7" width="10" height="7" fill="#e8d8b0"/><rect x="5.5" y="9" width="1.5" height="4" fill="#333"/></svg>
<svg class="abs" style="left:366px;top:587px" width="14" height="15"><rect x="0" y="0" width="14" height="15" fill="#e8e8e8"/><path d="M0 5 H3 V0 M11 0 V5 H14 M0 10 H3 V15 M11 15 V10 H14" stroke="#444" stroke-width="1.2" fill="none"/><circle cx="7" cy="7.5" r="3" fill="#aaa"/></svg>
<div class="tx" style="left:388px;top:590px;font-size:12px;color:#c8d4e4">X:</div>
<div class="inp" style="left:399px;top:585px;width:58px;height:18px"><span style="top:3px;font-size:11.5px">-39.825mm</span></div>
<div class="spn" style="left:457px;top:585px;width:10px;height:17px"></div>
<div class="tx" style="left:470px;top:590px;font-size:12px;color:#c8d4e4">Y:</div>
<div class="inp" style="left:481px;top:585px;width:47px;height:18px;overflow:hidden"><span style="top:3px;font-size:11.5px">34.174mm</span></div>
<div class="abs" style="left:528px;top:584px;width:42px;height:18px;background:#444;border-top:1px dotted #333;border-right:1px solid #111"></div>
<div class="abs" style="left:540px;top:598px;width:6px;height:4px;border-radius:3px 3px 0 0;background:#111"></div>
<div class="btn" style="left:572px;top:584px;width:67px;height:20px;border-color:#2e2e2e"></div>
<div class="lbl" style="left:576px;top:589px"><span class="g"><b>自</b><svg width="12" height="14" fill="currentColor" shape-rendering="crispEdges"><use href="#c81ea"/></svg></span><span class="g"><b>动</b><svg width="12" height="14" fill="currentColor" shape-rendering="crispEdges"><use href="#c52a8"/></svg></span><span class="g"><b>关</b><svg width="12" height="14" fill="currentColor" shape-rendering="crispEdges"><use href="#c5173"/></svg></span><span class="g"><b>键</b><svg width="12" height="14" fill="currentColor" shape-rendering="crispEdges"><use href="#c952e"/></svg></span><span class="g"><b>点</b><svg width="12" height="14" fill="currentColor" shape-rendering="crispEdges"><use href="#c70b9"/></svg></span></div>
<div class="abs" style="left:643px;top:584px;width:112px;height:20px;background:#fff;border:1px solid #111;border-bottom:none"></div>
<div class="lbl" style="left:646px;top:588px;color:#000"><span class="g"><b>选</b><svg width="12" height="14" fill="currentColor" shape-rendering="crispEdges"><use href="#c9009"/></svg></span><span class="g"><b>定</b><svg width="12" height="14" fill="currentColor" shape-rendering="crispEdges"><use href="#c5b9a"/></svg></span><span class="g"><b>对</b><svg width="12" height="14" fill="currentColor" shape-rendering="crispEdges"><use href="#c5bf9"/></svg></span><span class="g"><b>象</b><svg width="12" height="14" fill="currentColor" shape-rendering="crispEdges"><use href="#c8c61"/></svg></span></div>
<svg class="abs" style="left:744px;top:591px" width="9" height="7"><path d="M1 1.5 L4.5 5 L8 1.5" stroke="#2a4a8a" stroke-width="2.2" fill="none"/></svg>
<svg class="abs" style="left:768px;top:589px" width="18" height="12"><path d="M1.5 0 V12 M16.5 0 V12" stroke="#ccc" stroke-width="2"/><path d="M2.5 6 L9 1.5 V10.5 Z M9 6 L15.5 1.5 V10.5 Z" fill="none" stroke="#ccc" stroke-width="1.3"/><circle cx="9" cy="6" r="1.5" fill="#557"/></svg>
<div class="abs" style="left:790px;top:587px;width:1px;height:15px;background:#111"></div><div class="abs" style="left:794px;top:594px;width:2px;height:1px;background:#bbb"></div>
<svg class="abs" style="left:0;top:0" width="796" height="602"><rect x="365.5" y="98.5" width="362.0" height="362.09" fill="none" stroke="#5e9af4" stroke-width="1.3"/><path d="M365.5 104.60 H727.5" stroke="#5e9af4" stroke-width="1.3"/><path d="M365.5 117.31 H727.5" stroke="#5e9af4" stroke-width="1.3"/><path d="M365.5 130.03 H727.5" stroke="#5e9af4" stroke-width="1.3"/><path d="M365.5 142.74 H727.5" stroke="#5e9af4" stroke-width="1.3"/><path d="M365.5 155.46 H727.5" stroke="#5e9af4" stroke-width="1.3"/><path d="M365.5 168.17 H727.5" stroke="#5e9af4" stroke-width="1.3"/><path d="M365.5 180.88 H727.5" stroke="#5e9af4" stroke-width="1.3"/><path d="M365.5 193.60 H727.5" stroke="#5e9af4" stroke-width="1.3"/><path d="M365.5 206.31 H727.5" stroke="#5e9af4" stroke-width="1.3"/><path d="M365.5 219.03 H727.5" stroke="#5e9af4" stroke-width="1.3"/><path d="M365.5 231.74 H727.5" stroke="#5e9af4" stroke-width="1.3"/><path d="M365.5 244.45 H727.5" stroke="#5e9af4" stroke-width="1.3"/><path d="M365.5 257.17 H727.5" stroke="#5e9af4" stroke-width="1.3"/><path d="M365.5 269.88 H727.5" stroke="#5e9af4" stroke-width="1.3"/><path d="M365.5 282.60 H727.5" stroke="#5e9af4" stroke-width="1.3"/><path d="M365.5 295.31 H727.5" stroke="#5e9af4" stroke-width="1.3"/><path d="M365.5 308.02 H727.5" stroke="#5e9af4" stroke-width="1.3"/><path d="M365.5 320.74 H727.5" stroke="#5e9af4" stroke-width="1.3"/><path d="M365.5 333.45 H727.5" stroke="#5e9af4" stroke-width="1.3"/><path d="M365.5 346.17 H727.5" stroke="#5e9af4" stroke-width="1.3"/><path d="M365.5 358.88 H727.5" stroke="#5e9af4" stroke-width="1.3"/><path d="M365.5 371.59 H727.5" stroke="#5e9af4" stroke-width="1.3"/><path d="M365.5 384.31 H727.5" stroke="#5e9af4" stroke-width="1.3"/><path d="M365.5 397.02 H727.5" stroke="#5e9af4" stroke-width="1.3"/><path d="M365.5 409.74 H727.5" stroke="#5e9af4" stroke-width="1.3"/><path d="M365.5 422.45 H727.5" stroke="#5e9af4" stroke-width="1.3"/><path d="M365.5 435.16 H727.5" stroke="#5e9af4" stroke-width="1.3"/><path d="M365.5 447.88 H727.5" stroke="#5e9af4" stroke-width="1.3"/><path d="M401.72 98.50 V104.60" stroke="#5e9af4" stroke-width="1.3"/><path d="M582.82 98.50 V104.60" stroke="#5e9af4" stroke-width="1.3"/><path d="M437.94 104.60 V117.31" stroke="#5e9af4" stroke-width="1.3"/><path d="M619.04 104.60 V117.31" stroke="#5e9af4" stroke-width="1.3"/><path d="M474.16 117.31 V130.03" stroke="#5e9af4" stroke-width="1.3"/><path d="M655.26 117.31 V130.03" stroke="#5e9af4" stroke-width="1.3"/><path d="M510.38 130.03 V142.74" stroke="#5e9af4" stroke-width="1.3"/><path d="M691.48 130.03 V142.74" stroke="#5e9af4" stroke-width="1.3"/><path d="M546.60 142.74 V155.46" stroke="#5e9af4" stroke-width="1.3"/><path d="M401.72 155.46 V168.17" stroke="#5e9af4" stroke-width="1.3"/><path d="M582.82 155.46 V168.17" stroke="#5e9af4" stroke-width="1.3"/><path d="M437.94 168.17 V180.88" stroke="#5e9af4" stroke-width="1.3"/><path d="M619.04 168.17 V180.88" stroke="#5e9af4" stroke-width="1.3"/><path d="M474.16 180.88 V193.60" stroke="#5e9af4" stroke-width="1.3"/><path d="M655.26 180.88 V193.60" stroke="#5e9af4" stroke-width="1.3"/><path d="M510.38 193.60 V206.31" stroke="#5e9af4" stroke-width="1.3"/><path d="M691.48 193.60 V206.31" stroke="#5e9af4" stroke-width="1.3"/><path d="M546.60 206.31 V219.03" stroke="#5e9af4" stroke-width="1.3"/><path d="M401.72 219.03 V231.74" stroke="#5e9af4" stroke-width="1.3"/><path d="M582.82 219.03 V231.74" stroke="#5e9af4" stroke-width="1.3"/><path d="M437.94 231.74 V244.45" stroke="#5e9af4" stroke-width="1.3"/><path d="M619.04 231.74 V244.45" stroke="#5e9af4" stroke-width="1.3"/><path d="M474.16 244.45 V257.17" stroke="#5e9af4" stroke-width="1.3"/><path d="M655.26 244.45 V257.17" stroke="#5e9af4" stroke-width="1.3"/><path d="M510.38 257.17 V269.88" stroke="#5e9af4" stroke-width="1.3"/><path d="M691.48 257.17 V269.88" stroke="#5e9af4" stroke-width="1.3"/><path d="M546.60 269.88 V282.60" stroke="#5e9af4" stroke-width="1.3"/><path d="M401.72 282.60 V295.31" stroke="#5e9af4" stroke-width="1.3"/><path d="M582.82 282.60 V295.31" stroke="#5e9af4" stroke-width="1.3"/><path d="M437.94 295.31 V308.02" stroke="#5e9af4" stroke-width="1.3"/><path d="M619.04 295.31 V308.02" stroke="#5e9af4" stroke-width="1.3"/><path d="M474.16 308.02 V320.74" stroke="#5e9af4" stroke-width="1.3"/><path d="M655.26 308.02 V320.74" stroke="#5e9af4" stroke-width="1.3"/><path d="M510.38 320.74 V333.45" stroke="#5e9af4" stroke-width="1.3"/><path d="M691.48 320.74 V333.45" stroke="#5e9af4" stroke-width="1.3"/><path d="M546.60 333.45 V346.17" stroke="#5e9af4" stroke-width="1.3"/><path d="M401.72 346.17 V358.88" stroke="#5e9af4" stroke-width="1.3"/><path d="M582.82 346.17 V358.88" stroke="#5e9af4" stroke-width="1.3"/><path d="M437.94 358.88 V371.59" stroke="#5e9af4" stroke-width="1.3"/><path d="M619.04 358.88 V371.59" stroke="#5e9af4" stroke-width="1.3"/><path d="M474.16 371.59 V384.31" stroke="#5e9af4" stroke-width="1.3"/><path d="M655.26 371.59 V384.31" stroke="#5e9af4" stroke-width="1.3"/><path d="M510.38 384.31 V397.02" stroke="#5e9af4" stroke-width="1.3"/><path d="M691.48 384.31 V397.02" stroke="#5e9af4" stroke-width="1.3"/><path d="M546.60 397.02 V409.74" stroke="#5e9af4" stroke-width="1.3"/><path d="M401.72 409.74 V422.45" stroke="#5e9af4" stroke-width="1.3"/><path d="M582.82 409.74 V422.45" stroke="#5e9af4" stroke-width="1.3"/><path d="M437.94 422.45 V435.16" stroke="#5e9af4" stroke-width="1.3"/><path d="M619.04 422.45 V435.16" stroke="#5e9af4" stroke-width="1.3"/><path d="M474.16 435.16 V447.88" stroke="#5e9af4" stroke-width="1.3"/><path d="M655.26 435.16 V447.88" stroke="#5e9af4" stroke-width="1.3"/><path d="M510.38 447.88 V460.59" stroke="#5e9af4" stroke-width="1.3"/><path d="M691.48 447.88 V460.59" stroke="#5e9af4" stroke-width="1.3"/></svg>
<svg class="abs" style="left:0;top:0" width="796" height="602"><rect x="546.3" y="240.5" width="40" height="38.5" fill="rgba(200,190,40,0.38)"/><path d="M546.3 240.5 H586.2 V279" stroke="#f0e020" stroke-width="1.3" fill="none"/><path d="M546.3 191.5 V255.6" stroke="#f0e020" stroke-width="1.3"/><path d="M570.5 279.3 H634.3" stroke="#f0e020" stroke-width="1.3"/><path d="M546.3 161.3 L553 192.6 L540.5 192.6 Z" fill="#0a9a12"/><path d="M634 274.2 L643 274.8 L645 276.5 L652.5 276.8 L654 277.8 L662 278.3 L666 279 L666 280 L662 280.6 L654 281.3 L652.5 282.2 L645 282.5 L643 284 L634 284.6 Z" fill="#cc0a0a"/><rect x="538.8" y="271.5" width="16.8" height="16.8" fill="none" stroke="#a8a8a8" stroke-width="1.2"/></svg>
<div class="tx" style="left:545.5px;top:145px;color:#e8e040;font-size:12px">y</div>
<div class="tx" style="left:665.5px;top:265px;color:#e8e040;font-size:12px">x</div>
<svg class="abs" style="left:0;top:0" width="796" height="602"><circle cx="746.5" cy="66" r="30" fill="none" stroke="#c4c8d0" stroke-width="7"/><circle cx="746.5" cy="66" r="26" fill="#1c1c1c" stroke="#707070" stroke-width="1"/><rect x="730.7" y="50.7" width="31.6" height="31.6" fill="#c8ccd4" stroke="#8a8e96" stroke-width="1"/><rect x="737.3" y="57.3" width="18.3" height="18.3" fill="#b8bcc4"/><path d="M745.5 59.5 V71.5 M737.5 71.8 H755 M750.5 64.5 H754" stroke="#606468" stroke-width="1.2" fill="none"/><path d="M743.5 44.5 H749.5 L746.5 48 Z M743.5 88 H749.5 L746.5 84.5 Z M725 63.5 V69.5 L728.5 66.5 Z M768 63.5 V69.5 L764.5 66.5 Z" fill="#d8dce4"/><path d="M712.5 25.7 V19.5 L716.5 15.5 L719 17.5 V15.5 H720.5 V19 L721 19.5 V25.7 Z" fill="#9aa0a8"/><rect x="715" y="21" width="3.5" height="1.2" fill="#6a7078"/><path d="M778 19 Q788 19 794 27 M794 27 L796 40" stroke="#9aa0a8" stroke-width="3.5" fill="none"/><path d="M776 19 L781 14 L781 24 Z" fill="#9aa0a8"/></svg>
<div class="lbl" style="left:740px;top:28px;color:#888c94"><span class="g"><b>北</b><svg width="12" height="14" fill="currentColor" shape-rendering="crispEdges"><use href="#c5317"/></svg></span></div>
<div class="lbl" style="left:740px;top:94px;color:#888c94"><span class="g"><b>南</b><svg width="12" height="14" fill="currentColor" shape-rendering="crispEdges"><use href="#c5357"/></svg></span></div>
<div class="lbl" style="left:708px;top:60px;color:#888c94"><span class="g"><b>西</b><svg width="12" height="14" fill="currentColor" shape-rendering="crispEdges"><use href="#c897f"/></svg></span></div>
<div class="lbl" style="left:772px;top:60px;color:#888c94"><span class="g"><b>东</b><svg width="12" height="14" fill="currentColor" shape-rendering="crispEdges"><use href="#c4e1c"/></svg></span></div>
</body></html>
